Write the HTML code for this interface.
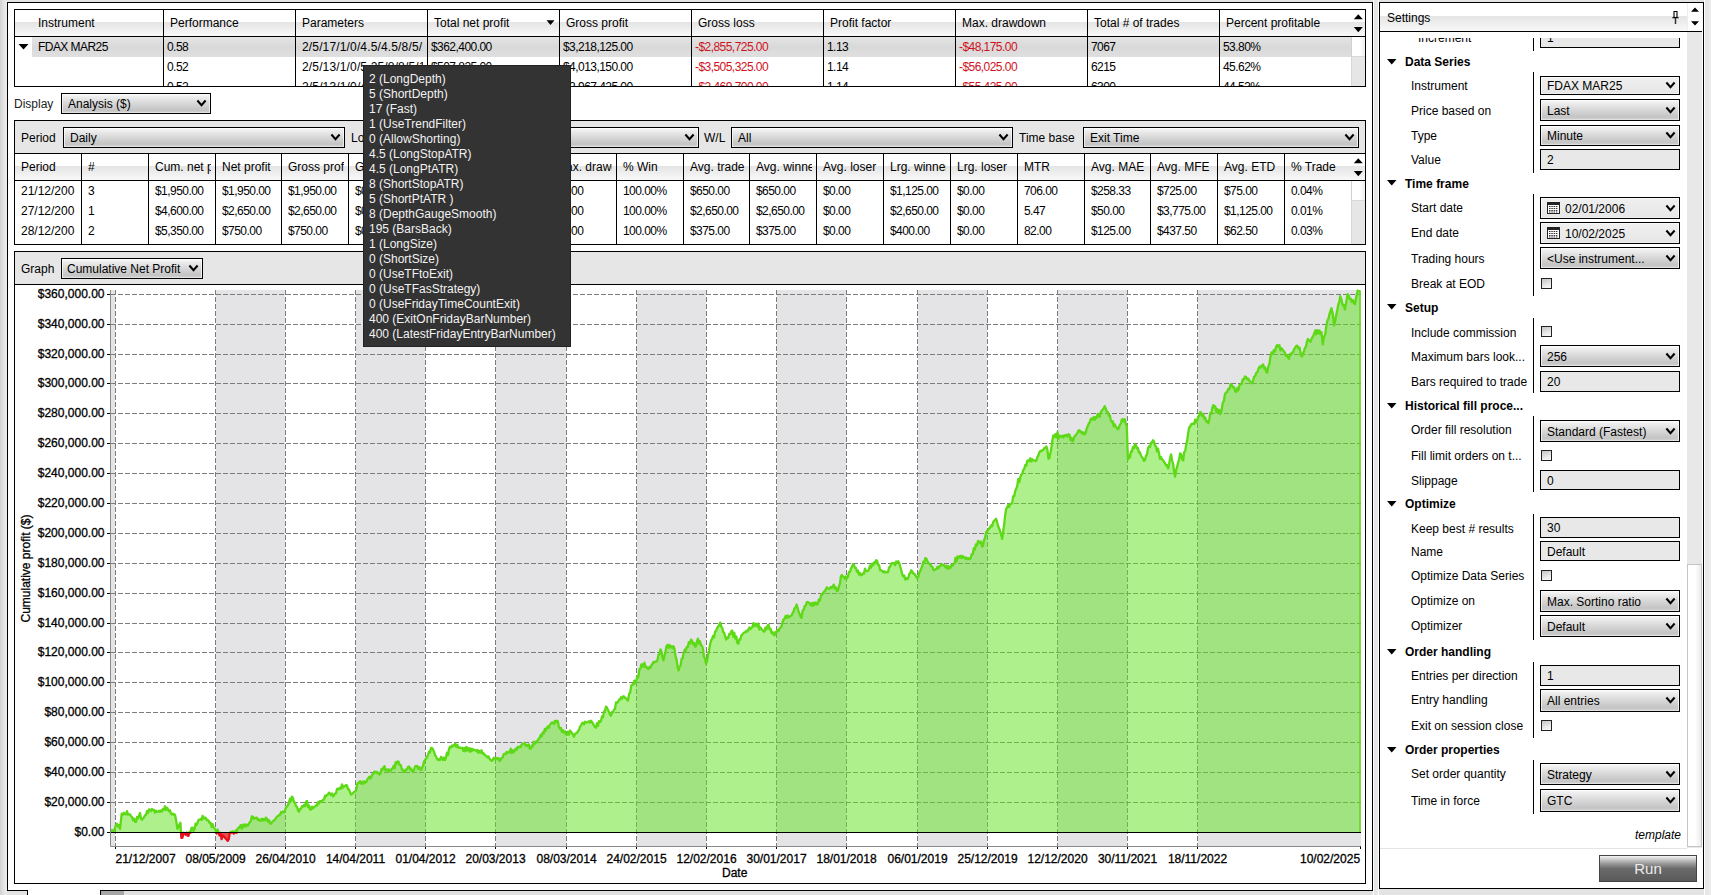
<!DOCTYPE html><html><head><meta charset="utf-8"><style>
*{box-sizing:border-box;margin:0;padding:0}
html,body{width:1711px;height:895px;overflow:hidden;background:#e3e3e3;font-family:"Liberation Sans",sans-serif;font-size:12px;color:#000}
.b{position:absolute}
.t{position:absolute;white-space:nowrap;line-height:15px;font-size:12px}
.cmb{border:1px solid #000;overflow:hidden}
.tbx{border:1px solid #000;background:#e8e8e8;overflow:hidden}
.hdr{background:linear-gradient(#fff 0,#fff 46%,#e5e5e5 48%,#eaeaea 62%,#f4f4f4 88%,#f8f8f8 100%)}
.red{color:#d0101c}
.clip{overflow:hidden}
.ax{-webkit-text-stroke:0.3px #000}
</style></head><body>
<div class="b" style="left:0px;top:0px;width:7px;height:895px;background:linear-gradient(90deg,#d2d2d2,#e6e6e6 60%,#ececec)"></div>
<div class="b" style="left:7px;top:2px;width:1366px;height:889px;background:#fff;border:1px solid #000;border-bottom:none"></div>
<div class="b" style="left:7px;top:890px;width:21px;height:1px;background:#000"></div>
<div class="b" style="left:100px;top:890px;width:1273px;height:1px;background:#000"></div>
<div class="b" style="left:27px;top:890px;width:1px;height:5px;background:#000"></div>
<div class="b" style="left:100px;top:890px;width:1px;height:5px;background:#000"></div>
<div class="b" style="left:28px;top:891px;width:72px;height:4px;background:#fff"></div>
<div class="b" style="left:101px;top:891px;width:1271px;height:4px;background:#e0e0e0"></div>
<div class="b" style="left:101px;top:891px;width:23px;height:4px;background:#a6a6a6"></div>
<div class="b" style="left:14px;top:9px;width:1352px;height:78px;border:1px solid #000;background:#fff"></div>
<div class="b" style="left:15px;top:10px;width:1335px;height:26px;"></div>
<div class="b hdr" style="left:15px;top:10px;width:1350px;height:26px"></div>
<div class="b" style="left:15px;top:36px;width:1350px;height:1px;background:#000"></div>
<div class="b" style="left:32px;top:37px;width:131px;height:20px;background:linear-gradient(#e4e4e4,#d9d9d9 50%,#dfdfdf)"></div>
<div class="b" style="left:164px;top:37px;width:1187px;height:20px;background:linear-gradient(#e4e4e4,#d9d9d9 50%,#dfdfdf)"></div>
<div class="b" style="left:163px;top:10px;width:1px;height:76px;background:#000"></div>
<div class="b" style="left:295px;top:10px;width:1px;height:76px;background:#000"></div>
<div class="b" style="left:427px;top:10px;width:1px;height:76px;background:#000"></div>
<div class="b" style="left:559px;top:10px;width:1px;height:76px;background:#000"></div>
<div class="b" style="left:691px;top:10px;width:1px;height:76px;background:#000"></div>
<div class="b" style="left:823px;top:10px;width:1px;height:76px;background:#000"></div>
<div class="b" style="left:955px;top:10px;width:1px;height:76px;background:#000"></div>
<div class="b" style="left:1087px;top:10px;width:1px;height:76px;background:#000"></div>
<div class="b" style="left:1219px;top:10px;width:1px;height:76px;background:#000"></div>
<div class="t " style="left:38px;top:16.34px;">Instrument</div>
<div class="t " style="left:170px;top:16.34px;">Performance</div>
<div class="t " style="left:302px;top:16.34px;">Parameters</div>
<div class="t " style="left:434px;top:16.34px;">Total net profit</div>
<div class="t " style="left:566px;top:16.34px;">Gross profit</div>
<div class="t " style="left:698px;top:16.34px;">Gross loss</div>
<div class="t " style="left:830px;top:16.34px;">Profit factor</div>
<div class="t " style="left:962px;top:16.34px;">Max. drawdown</div>
<div class="t " style="left:1094px;top:16.34px;">Total # of trades</div>
<div class="t " style="left:1226px;top:16.34px;">Percent profitable</div>
<svg class="b" style="left:546px;top:20px" width="9" height="6"><path d="M0.5 0.3 L8.5 0.3 L4.5 5 Z" fill="#000"/></svg>
<svg class="b" style="left:18px;top:44px" width="11" height="6"><path d="M0.5 0 L10.5 0 L5.5 5.5 Z" fill="#000"/></svg>
<div class="b clip" style="left:15px;top:37px;width:144px;height:49px"><div class="t " style="left:23px;top:3.34px;letter-spacing:-0.55px">FDAX MAR25</div></div>
<div class="b clip" style="left:164px;top:37px;width:127px;height:49px"><div class="t " style="left:3px;top:3.34px;letter-spacing:-0.55px">0.58</div></div>
<div class="b clip" style="left:296px;top:37px;width:127px;height:49px"><div class="t " style="left:6px;top:3.34px;letter-spacing:0.15px">2/5/17/1/0/4.5/4.5/8/5/195/</div></div>
<div class="b clip" style="left:428px;top:37px;width:127px;height:49px"><div class="t " style="left:3px;top:3.34px;letter-spacing:-0.55px">$362,400.00</div></div>
<div class="b clip" style="left:560px;top:37px;width:127px;height:49px"><div class="t " style="left:3px;top:3.34px;letter-spacing:-0.55px">$3,218,125.00</div></div>
<div class="b clip" style="left:692px;top:37px;width:127px;height:49px"><div class="t red" style="left:3px;top:3.34px;letter-spacing:-0.55px">-$2,855,725.00</div></div>
<div class="b clip" style="left:824px;top:37px;width:127px;height:49px"><div class="t " style="left:3px;top:3.34px;letter-spacing:-0.55px">1.13</div></div>
<div class="b clip" style="left:956px;top:37px;width:127px;height:49px"><div class="t red" style="left:3px;top:3.34px;letter-spacing:-0.55px">-$48,175.00</div></div>
<div class="b clip" style="left:1088px;top:37px;width:127px;height:49px"><div class="t " style="left:3px;top:3.34px;letter-spacing:-0.55px">7067</div></div>
<div class="b clip" style="left:1220px;top:37px;width:126px;height:49px"><div class="t " style="left:3px;top:3.34px;letter-spacing:-0.55px">53.80%</div></div>
<div class="b clip" style="left:164px;top:37px;width:127px;height:49px"><div class="t " style="left:3px;top:23.34px;letter-spacing:-0.55px">0.52</div></div>
<div class="b clip" style="left:296px;top:37px;width:127px;height:49px"><div class="t " style="left:6px;top:23.34px;letter-spacing:0.15px">2/5/13/1/0/5.25/8/8/5/195</div></div>
<div class="b clip" style="left:428px;top:37px;width:127px;height:49px"><div class="t " style="left:3px;top:23.34px;letter-spacing:-0.55px">$507,825.00</div></div>
<div class="b clip" style="left:560px;top:37px;width:127px;height:49px"><div class="t " style="left:3px;top:23.34px;letter-spacing:-0.55px">$4,013,150.00</div></div>
<div class="b clip" style="left:692px;top:37px;width:127px;height:49px"><div class="t red" style="left:3px;top:23.34px;letter-spacing:-0.55px">-$3,505,325.00</div></div>
<div class="b clip" style="left:824px;top:37px;width:127px;height:49px"><div class="t " style="left:3px;top:23.34px;letter-spacing:-0.55px">1.14</div></div>
<div class="b clip" style="left:956px;top:37px;width:127px;height:49px"><div class="t red" style="left:3px;top:23.34px;letter-spacing:-0.55px">-$56,025.00</div></div>
<div class="b clip" style="left:1088px;top:37px;width:127px;height:49px"><div class="t " style="left:3px;top:23.34px;letter-spacing:-0.55px">6215</div></div>
<div class="b clip" style="left:1220px;top:37px;width:126px;height:49px"><div class="t " style="left:3px;top:23.34px;letter-spacing:-0.55px">45.62%</div></div>
<div class="b clip" style="left:164px;top:37px;width:127px;height:49px"><div class="t " style="left:3px;top:43.34px;letter-spacing:-0.55px">0.52</div></div>
<div class="b clip" style="left:296px;top:37px;width:127px;height:49px"><div class="t " style="left:6px;top:43.34px;letter-spacing:0.15px">2/5/13/1/0/4.5/8/8/5/195</div></div>
<div class="b clip" style="left:428px;top:37px;width:127px;height:49px"><div class="t " style="left:3px;top:43.34px;letter-spacing:-0.55px">$497,725.00</div></div>
<div class="b clip" style="left:560px;top:37px;width:127px;height:49px"><div class="t " style="left:3px;top:43.34px;letter-spacing:-0.55px">$2,967,425.00</div></div>
<div class="b clip" style="left:692px;top:37px;width:127px;height:49px"><div class="t red" style="left:3px;top:43.34px;letter-spacing:-0.55px">-$2,469,700.00</div></div>
<div class="b clip" style="left:824px;top:37px;width:127px;height:49px"><div class="t " style="left:3px;top:43.34px;letter-spacing:-0.55px">1.14</div></div>
<div class="b clip" style="left:956px;top:37px;width:127px;height:49px"><div class="t red" style="left:3px;top:43.34px;letter-spacing:-0.55px">-$55,425.00</div></div>
<div class="b clip" style="left:1088px;top:37px;width:127px;height:49px"><div class="t " style="left:3px;top:43.34px;letter-spacing:-0.55px">6300</div></div>
<div class="b clip" style="left:1220px;top:37px;width:126px;height:49px"><div class="t " style="left:3px;top:43.34px;letter-spacing:-0.55px">44.53%</div></div>
<div class="b" style="left:1351px;top:37px;width:14px;height:49px;background:#e6e6e6;border-left:1px solid #d8d8d8"></div>
<svg class="b" style="left:1353px;top:13px" width="11" height="21"><path d="M0.8 6.3 L9.8 6.3 L5.3 1.2 Z M0.8 14 L9.8 14 L5.3 19.2 Z" fill="#000"/></svg>
<div class="b" style="left:1351px;top:37px;width:14px;height:20px;background:linear-gradient(90deg,#fff 60%,#eee);border-left:1px solid #d0d0d0;border-bottom:1px solid #d8d8d8"></div>
<div class="t " style="left:14px;top:97.34px;color:#222">Display</div>
<div class="b cmb" style="left:61px;top:93px;width:150px;height:21px;background:linear-gradient(#fbfbfb 0,#efefef 12%,#dadada 45%,#c4c4c4 85%,#d4d4d4 100%);"><div class="b" style="left:0;top:0;right:0;bottom:0;border:1px solid rgba(255,255,255,0.7);border-bottom-color:rgba(255,255,255,0.35)"></div><div class="t" style="left:6px;top:3.14px">Analysis ($)</div><svg width="11" height="9" viewBox="0 0 11 9" style="position:absolute;right:3.5px;top:5.0px"><path d="M1.4 1.5 L5.5 6.2 L9.6 1.5" fill="none" stroke="#000" stroke-width="2"/></svg></div>
<div class="b" style="left:14px;top:120px;width:1352px;height:125px;border:1px solid #000;background:#fff"></div>
<div class="b" style="left:15px;top:121px;width:1350px;height:32px;background:#e6e6e6"></div>
<div class="b" style="left:15px;top:153px;width:1350px;height:1px;background:#000"></div>
<div class="t " style="left:21px;top:131.34px;">Period</div>
<div class="b cmb" style="left:63px;top:127px;width:282px;height:21px;background:linear-gradient(#fbfbfb 0,#efefef 12%,#dadada 45%,#c4c4c4 85%,#d4d4d4 100%);"><div class="b" style="left:0;top:0;right:0;bottom:0;border:1px solid rgba(255,255,255,0.7);border-bottom-color:rgba(255,255,255,0.35)"></div><div class="t" style="left:6px;top:3.14px">Daily</div><svg width="11" height="9" viewBox="0 0 11 9" style="position:absolute;right:3.5px;top:5.0px"><path d="M1.4 1.5 L5.5 6.2 L9.6 1.5" fill="none" stroke="#000" stroke-width="2"/></svg></div>
<div class="t " style="left:351px;top:131.34px;">Long/Short</div>
<div class="b cmb" style="left:440px;top:127px;width:259px;height:21px;background:linear-gradient(#fbfbfb 0,#efefef 12%,#dadada 45%,#c4c4c4 85%,#d4d4d4 100%);"><div class="b" style="left:0;top:0;right:0;bottom:0;border:1px solid rgba(255,255,255,0.7);border-bottom-color:rgba(255,255,255,0.35)"></div><div class="t" style="left:6px;top:3.14px"></div><svg width="11" height="9" viewBox="0 0 11 9" style="position:absolute;right:3.5px;top:5.0px"><path d="M1.4 1.5 L5.5 6.2 L9.6 1.5" fill="none" stroke="#000" stroke-width="2"/></svg></div>
<div class="t " style="left:704px;top:131.34px;">W/L</div>
<div class="b cmb" style="left:731px;top:127px;width:282px;height:21px;background:linear-gradient(#fbfbfb 0,#efefef 12%,#dadada 45%,#c4c4c4 85%,#d4d4d4 100%);"><div class="b" style="left:0;top:0;right:0;bottom:0;border:1px solid rgba(255,255,255,0.7);border-bottom-color:rgba(255,255,255,0.35)"></div><div class="t" style="left:6px;top:3.14px">All</div><svg width="11" height="9" viewBox="0 0 11 9" style="position:absolute;right:3.5px;top:5.0px"><path d="M1.4 1.5 L5.5 6.2 L9.6 1.5" fill="none" stroke="#000" stroke-width="2"/></svg></div>
<div class="t " style="left:1019px;top:131.34px;">Time base</div>
<div class="b cmb" style="left:1083px;top:127px;width:276px;height:21px;background:linear-gradient(#fbfbfb 0,#efefef 12%,#dadada 45%,#c4c4c4 85%,#d4d4d4 100%);"><div class="b" style="left:0;top:0;right:0;bottom:0;border:1px solid rgba(255,255,255,0.7);border-bottom-color:rgba(255,255,255,0.35)"></div><div class="t" style="left:6px;top:3.14px">Exit Time</div><svg width="11" height="9" viewBox="0 0 11 9" style="position:absolute;right:3.5px;top:5.0px"><path d="M1.4 1.5 L5.5 6.2 L9.6 1.5" fill="none" stroke="#000" stroke-width="2"/></svg></div>
<div class="b hdr" style="left:15px;top:154px;width:1350px;height:26px"></div>
<div class="b" style="left:15px;top:180px;width:1350px;height:1px;background:#000"></div>
<div class="b" style="left:81px;top:154px;width:1px;height:90px;background:#000"></div>
<div class="b" style="left:148px;top:154px;width:1px;height:90px;background:#000"></div>
<div class="b" style="left:215px;top:154px;width:1px;height:90px;background:#000"></div>
<div class="b" style="left:281px;top:154px;width:1px;height:90px;background:#000"></div>
<div class="b" style="left:348px;top:154px;width:1px;height:90px;background:#000"></div>
<div class="b" style="left:415px;top:154px;width:1px;height:90px;background:#000"></div>
<div class="b" style="left:482px;top:154px;width:1px;height:90px;background:#000"></div>
<div class="b" style="left:549px;top:154px;width:1px;height:90px;background:#000"></div>
<div class="b" style="left:616px;top:154px;width:1px;height:90px;background:#000"></div>
<div class="b" style="left:683px;top:154px;width:1px;height:90px;background:#000"></div>
<div class="b" style="left:749px;top:154px;width:1px;height:90px;background:#000"></div>
<div class="b" style="left:816px;top:154px;width:1px;height:90px;background:#000"></div>
<div class="b" style="left:883px;top:154px;width:1px;height:90px;background:#000"></div>
<div class="b" style="left:950px;top:154px;width:1px;height:90px;background:#000"></div>
<div class="b" style="left:1017px;top:154px;width:1px;height:90px;background:#000"></div>
<div class="b" style="left:1084px;top:154px;width:1px;height:90px;background:#000"></div>
<div class="b" style="left:1150px;top:154px;width:1px;height:90px;background:#000"></div>
<div class="b" style="left:1217px;top:154px;width:1px;height:90px;background:#000"></div>
<div class="b" style="left:1284px;top:154px;width:1px;height:90px;background:#000"></div>
<div class="b clip" style="left:15px;top:154px;width:62px;height:26px"><div class="t" style="left:6px;top:6.34px">Period</div></div>
<div class="b clip" style="left:82px;top:154px;width:62px;height:26px"><div class="t" style="left:6px;top:6.34px">#</div></div>
<div class="b clip" style="left:149px;top:154px;width:62px;height:26px"><div class="t" style="left:6px;top:6.34px">Cum. net profit</div></div>
<div class="b clip" style="left:216px;top:154px;width:61px;height:26px"><div class="t" style="left:6px;top:6.34px">Net profit</div></div>
<div class="b clip" style="left:282px;top:154px;width:62px;height:26px"><div class="t" style="left:6px;top:6.34px">Gross profit</div></div>
<div class="b clip" style="left:349px;top:154px;width:62px;height:26px"><div class="t" style="left:6px;top:6.34px">Gross loss</div></div>
<div class="b clip" style="left:416px;top:154px;width:62px;height:26px"><div class="t" style="left:6px;top:6.34px">Commission</div></div>
<div class="b clip" style="left:483px;top:154px;width:62px;height:26px"><div class="t" style="left:6px;top:6.34px">Cum. max. drawdown</div></div>
<div class="b clip" style="left:550px;top:154px;width:62px;height:26px"><div class="t" style="left:6px;top:6.34px">Max. drawdown</div></div>
<div class="b clip" style="left:617px;top:154px;width:62px;height:26px"><div class="t" style="left:6px;top:6.34px">% Win</div></div>
<div class="b clip" style="left:684px;top:154px;width:61px;height:26px"><div class="t" style="left:6px;top:6.34px">Avg. trade</div></div>
<div class="b clip" style="left:750px;top:154px;width:62px;height:26px"><div class="t" style="left:6px;top:6.34px">Avg. winner</div></div>
<div class="b clip" style="left:817px;top:154px;width:62px;height:26px"><div class="t" style="left:6px;top:6.34px">Avg. loser</div></div>
<div class="b clip" style="left:884px;top:154px;width:62px;height:26px"><div class="t" style="left:6px;top:6.34px">Lrg. winner</div></div>
<div class="b clip" style="left:951px;top:154px;width:62px;height:26px"><div class="t" style="left:6px;top:6.34px">Lrg. loser</div></div>
<div class="b clip" style="left:1018px;top:154px;width:62px;height:26px"><div class="t" style="left:6px;top:6.34px">MTR</div></div>
<div class="b clip" style="left:1085px;top:154px;width:61px;height:26px"><div class="t" style="left:6px;top:6.34px">Avg. MAE</div></div>
<div class="b clip" style="left:1151px;top:154px;width:62px;height:26px"><div class="t" style="left:6px;top:6.34px">Avg. MFE</div></div>
<div class="b clip" style="left:1218px;top:154px;width:62px;height:26px"><div class="t" style="left:6px;top:6.34px">Avg. ETD</div></div>
<div class="b clip" style="left:1285px;top:154px;width:61px;height:26px"><div class="t" style="left:6px;top:6.34px">% Trade</div></div>
<div class="b clip" style="left:15px;top:181px;width:60px;height:63px"><div class="t" style="left:6px;top:3.34px;letter-spacing:0px">21/12/2007</div></div>
<div class="b clip" style="left:82px;top:181px;width:62px;height:63px"><div class="t" style="left:6px;top:3.34px;letter-spacing:-0.55px">3</div></div>
<div class="b clip" style="left:149px;top:181px;width:62px;height:63px"><div class="t" style="left:6px;top:3.34px;letter-spacing:-0.55px">$1,950.00</div></div>
<div class="b clip" style="left:216px;top:181px;width:61px;height:63px"><div class="t" style="left:6px;top:3.34px;letter-spacing:-0.55px">$1,950.00</div></div>
<div class="b clip" style="left:282px;top:181px;width:62px;height:63px"><div class="t" style="left:6px;top:3.34px;letter-spacing:-0.55px">$1,950.00</div></div>
<div class="b clip" style="left:349px;top:181px;width:62px;height:63px"><div class="t" style="left:6px;top:3.34px;letter-spacing:-0.55px">$0.00</div></div>
<div class="b clip" style="left:416px;top:181px;width:62px;height:63px"><div class="t" style="left:6px;top:3.34px;letter-spacing:-0.55px">$0.00</div></div>
<div class="b clip" style="left:483px;top:181px;width:62px;height:63px"><div class="t" style="left:6px;top:3.34px;letter-spacing:-0.55px">$0.00</div></div>
<div class="b clip" style="left:550px;top:181px;width:62px;height:63px"><div class="t" style="left:6px;top:3.34px;letter-spacing:-0.55px">$0.00</div></div>
<div class="b clip" style="left:617px;top:181px;width:62px;height:63px"><div class="t" style="left:6px;top:3.34px;letter-spacing:-0.55px">100.00%</div></div>
<div class="b clip" style="left:684px;top:181px;width:61px;height:63px"><div class="t" style="left:6px;top:3.34px;letter-spacing:-0.55px">$650.00</div></div>
<div class="b clip" style="left:750px;top:181px;width:62px;height:63px"><div class="t" style="left:6px;top:3.34px;letter-spacing:-0.55px">$650.00</div></div>
<div class="b clip" style="left:817px;top:181px;width:62px;height:63px"><div class="t" style="left:6px;top:3.34px;letter-spacing:-0.55px">$0.00</div></div>
<div class="b clip" style="left:884px;top:181px;width:62px;height:63px"><div class="t" style="left:6px;top:3.34px;letter-spacing:-0.55px">$1,125.00</div></div>
<div class="b clip" style="left:951px;top:181px;width:62px;height:63px"><div class="t" style="left:6px;top:3.34px;letter-spacing:-0.55px">$0.00</div></div>
<div class="b clip" style="left:1018px;top:181px;width:62px;height:63px"><div class="t" style="left:6px;top:3.34px;letter-spacing:-0.55px">706.00</div></div>
<div class="b clip" style="left:1085px;top:181px;width:61px;height:63px"><div class="t" style="left:6px;top:3.34px;letter-spacing:-0.55px">$258.33</div></div>
<div class="b clip" style="left:1151px;top:181px;width:62px;height:63px"><div class="t" style="left:6px;top:3.34px;letter-spacing:-0.55px">$725.00</div></div>
<div class="b clip" style="left:1218px;top:181px;width:62px;height:63px"><div class="t" style="left:6px;top:3.34px;letter-spacing:-0.55px">$75.00</div></div>
<div class="b clip" style="left:1285px;top:181px;width:61px;height:63px"><div class="t" style="left:6px;top:3.34px;letter-spacing:-0.55px">0.04%</div></div>
<div class="b clip" style="left:15px;top:181px;width:60px;height:63px"><div class="t" style="left:6px;top:23.34px;letter-spacing:0px">27/12/2007</div></div>
<div class="b clip" style="left:82px;top:181px;width:62px;height:63px"><div class="t" style="left:6px;top:23.34px;letter-spacing:-0.55px">1</div></div>
<div class="b clip" style="left:149px;top:181px;width:62px;height:63px"><div class="t" style="left:6px;top:23.34px;letter-spacing:-0.55px">$4,600.00</div></div>
<div class="b clip" style="left:216px;top:181px;width:61px;height:63px"><div class="t" style="left:6px;top:23.34px;letter-spacing:-0.55px">$2,650.00</div></div>
<div class="b clip" style="left:282px;top:181px;width:62px;height:63px"><div class="t" style="left:6px;top:23.34px;letter-spacing:-0.55px">$2,650.00</div></div>
<div class="b clip" style="left:349px;top:181px;width:62px;height:63px"><div class="t" style="left:6px;top:23.34px;letter-spacing:-0.55px">$0.00</div></div>
<div class="b clip" style="left:416px;top:181px;width:62px;height:63px"><div class="t" style="left:6px;top:23.34px;letter-spacing:-0.55px">$0.00</div></div>
<div class="b clip" style="left:483px;top:181px;width:62px;height:63px"><div class="t" style="left:6px;top:23.34px;letter-spacing:-0.55px">$0.00</div></div>
<div class="b clip" style="left:550px;top:181px;width:62px;height:63px"><div class="t" style="left:6px;top:23.34px;letter-spacing:-0.55px">$0.00</div></div>
<div class="b clip" style="left:617px;top:181px;width:62px;height:63px"><div class="t" style="left:6px;top:23.34px;letter-spacing:-0.55px">100.00%</div></div>
<div class="b clip" style="left:684px;top:181px;width:61px;height:63px"><div class="t" style="left:6px;top:23.34px;letter-spacing:-0.55px">$2,650.00</div></div>
<div class="b clip" style="left:750px;top:181px;width:62px;height:63px"><div class="t" style="left:6px;top:23.34px;letter-spacing:-0.55px">$2,650.00</div></div>
<div class="b clip" style="left:817px;top:181px;width:62px;height:63px"><div class="t" style="left:6px;top:23.34px;letter-spacing:-0.55px">$0.00</div></div>
<div class="b clip" style="left:884px;top:181px;width:62px;height:63px"><div class="t" style="left:6px;top:23.34px;letter-spacing:-0.55px">$2,650.00</div></div>
<div class="b clip" style="left:951px;top:181px;width:62px;height:63px"><div class="t" style="left:6px;top:23.34px;letter-spacing:-0.55px">$0.00</div></div>
<div class="b clip" style="left:1018px;top:181px;width:62px;height:63px"><div class="t" style="left:6px;top:23.34px;letter-spacing:-0.55px">5.47</div></div>
<div class="b clip" style="left:1085px;top:181px;width:61px;height:63px"><div class="t" style="left:6px;top:23.34px;letter-spacing:-0.55px">$50.00</div></div>
<div class="b clip" style="left:1151px;top:181px;width:62px;height:63px"><div class="t" style="left:6px;top:23.34px;letter-spacing:-0.55px">$3,775.00</div></div>
<div class="b clip" style="left:1218px;top:181px;width:62px;height:63px"><div class="t" style="left:6px;top:23.34px;letter-spacing:-0.55px">$1,125.00</div></div>
<div class="b clip" style="left:1285px;top:181px;width:61px;height:63px"><div class="t" style="left:6px;top:23.34px;letter-spacing:-0.55px">0.01%</div></div>
<div class="b clip" style="left:15px;top:181px;width:60px;height:63px"><div class="t" style="left:6px;top:43.34px;letter-spacing:0px">28/12/2007</div></div>
<div class="b clip" style="left:82px;top:181px;width:62px;height:63px"><div class="t" style="left:6px;top:43.34px;letter-spacing:-0.55px">2</div></div>
<div class="b clip" style="left:149px;top:181px;width:62px;height:63px"><div class="t" style="left:6px;top:43.34px;letter-spacing:-0.55px">$5,350.00</div></div>
<div class="b clip" style="left:216px;top:181px;width:61px;height:63px"><div class="t" style="left:6px;top:43.34px;letter-spacing:-0.55px">$750.00</div></div>
<div class="b clip" style="left:282px;top:181px;width:62px;height:63px"><div class="t" style="left:6px;top:43.34px;letter-spacing:-0.55px">$750.00</div></div>
<div class="b clip" style="left:349px;top:181px;width:62px;height:63px"><div class="t" style="left:6px;top:43.34px;letter-spacing:-0.55px">$0.00</div></div>
<div class="b clip" style="left:416px;top:181px;width:62px;height:63px"><div class="t" style="left:6px;top:43.34px;letter-spacing:-0.55px">$0.00</div></div>
<div class="b clip" style="left:483px;top:181px;width:62px;height:63px"><div class="t" style="left:6px;top:43.34px;letter-spacing:-0.55px">$0.00</div></div>
<div class="b clip" style="left:550px;top:181px;width:62px;height:63px"><div class="t" style="left:6px;top:43.34px;letter-spacing:-0.55px">$0.00</div></div>
<div class="b clip" style="left:617px;top:181px;width:62px;height:63px"><div class="t" style="left:6px;top:43.34px;letter-spacing:-0.55px">100.00%</div></div>
<div class="b clip" style="left:684px;top:181px;width:61px;height:63px"><div class="t" style="left:6px;top:43.34px;letter-spacing:-0.55px">$375.00</div></div>
<div class="b clip" style="left:750px;top:181px;width:62px;height:63px"><div class="t" style="left:6px;top:43.34px;letter-spacing:-0.55px">$375.00</div></div>
<div class="b clip" style="left:817px;top:181px;width:62px;height:63px"><div class="t" style="left:6px;top:43.34px;letter-spacing:-0.55px">$0.00</div></div>
<div class="b clip" style="left:884px;top:181px;width:62px;height:63px"><div class="t" style="left:6px;top:43.34px;letter-spacing:-0.55px">$400.00</div></div>
<div class="b clip" style="left:951px;top:181px;width:62px;height:63px"><div class="t" style="left:6px;top:43.34px;letter-spacing:-0.55px">$0.00</div></div>
<div class="b clip" style="left:1018px;top:181px;width:62px;height:63px"><div class="t" style="left:6px;top:43.34px;letter-spacing:-0.55px">82.00</div></div>
<div class="b clip" style="left:1085px;top:181px;width:61px;height:63px"><div class="t" style="left:6px;top:43.34px;letter-spacing:-0.55px">$125.00</div></div>
<div class="b clip" style="left:1151px;top:181px;width:62px;height:63px"><div class="t" style="left:6px;top:43.34px;letter-spacing:-0.55px">$437.50</div></div>
<div class="b clip" style="left:1218px;top:181px;width:62px;height:63px"><div class="t" style="left:6px;top:43.34px;letter-spacing:-0.55px">$62.50</div></div>
<div class="b clip" style="left:1285px;top:181px;width:61px;height:63px"><div class="t" style="left:6px;top:43.34px;letter-spacing:-0.55px">0.03%</div></div>
<div class="b" style="left:1351px;top:181px;width:14px;height:63px;background:#e6e6e6;border-left:1px solid #d8d8d8"></div>
<svg class="b" style="left:1353px;top:157px" width="11" height="21"><path d="M0.8 6.3 L9.8 6.3 L5.3 1.2 Z M0.8 14 L9.8 14 L5.3 19.2 Z" fill="#000"/></svg>
<div class="b" style="left:1351px;top:181px;width:14px;height:20px;background:linear-gradient(90deg,#fff 60%,#eee);border-left:1px solid #d0d0d0;border-bottom:1px solid #d8d8d8"></div>
<div class="b" style="left:14px;top:251px;width:1352px;height:633px;border:1px solid #000;background:#fff"></div>
<div class="b" style="left:15px;top:252px;width:1350px;height:32px;background:#e6e6e6"></div>
<div class="b" style="left:15px;top:284px;width:1350px;height:1px;background:#000"></div>
<div class="t " style="left:21px;top:262.34px;">Graph</div>
<div class="b cmb" style="left:61px;top:258px;width:142px;height:21px;background:linear-gradient(#fbfbfb 0,#efefef 12%,#dadada 45%,#c4c4c4 85%,#d4d4d4 100%);"><div class="b" style="left:0;top:0;right:0;bottom:0;border:1px solid rgba(255,255,255,0.7);border-bottom-color:rgba(255,255,255,0.35)"></div><div class="t" style="left:5px;top:3.14px">Cumulative Net Profit</div><svg width="11" height="9" viewBox="0 0 11 9" style="position:absolute;right:3.5px;top:5.0px"><path d="M1.4 1.5 L5.5 6.2 L9.6 1.5" fill="none" stroke="#000" stroke-width="2"/></svg></div>
<svg class="b" style="left:0;top:0" width="1711" height="895" viewBox="0 0 1711 895"><rect x="111" y="290" width="4" height="556" fill="#e4e4e7"/><rect x="216" y="290" width="69" height="556" fill="#e4e4e7"/><rect x="356" y="290" width="69" height="556" fill="#e4e4e7"/><rect x="496" y="290" width="70" height="556" fill="#e4e4e7"/><rect x="637" y="290" width="69" height="556" fill="#e4e4e7"/><rect x="777" y="290" width="69" height="556" fill="#e4e4e7"/><rect x="918" y="290" width="69" height="556" fill="#e4e4e7"/><rect x="1058" y="290" width="69" height="556" fill="#e4e4e7"/><rect x="1198" y="290" width="163" height="556" fill="#e4e4e7"/><line x1="111" y1="802.5" x2="1361" y2="802.5" stroke="#7c7c7c" stroke-width="1" stroke-dasharray="5,2"/><line x1="111" y1="772.5" x2="1361" y2="772.5" stroke="#7c7c7c" stroke-width="1" stroke-dasharray="5,2"/><line x1="111" y1="742.5" x2="1361" y2="742.5" stroke="#7c7c7c" stroke-width="1" stroke-dasharray="5,2"/><line x1="111" y1="712.5" x2="1361" y2="712.5" stroke="#7c7c7c" stroke-width="1" stroke-dasharray="5,2"/><line x1="111" y1="682.5" x2="1361" y2="682.5" stroke="#7c7c7c" stroke-width="1" stroke-dasharray="5,2"/><line x1="111" y1="652.5" x2="1361" y2="652.5" stroke="#7c7c7c" stroke-width="1" stroke-dasharray="5,2"/><line x1="111" y1="623.5" x2="1361" y2="623.5" stroke="#7c7c7c" stroke-width="1" stroke-dasharray="5,2"/><line x1="111" y1="593.5" x2="1361" y2="593.5" stroke="#7c7c7c" stroke-width="1" stroke-dasharray="5,2"/><line x1="111" y1="563.5" x2="1361" y2="563.5" stroke="#7c7c7c" stroke-width="1" stroke-dasharray="5,2"/><line x1="111" y1="533.5" x2="1361" y2="533.5" stroke="#7c7c7c" stroke-width="1" stroke-dasharray="5,2"/><line x1="111" y1="503.5" x2="1361" y2="503.5" stroke="#7c7c7c" stroke-width="1" stroke-dasharray="5,2"/><line x1="111" y1="473.5" x2="1361" y2="473.5" stroke="#7c7c7c" stroke-width="1" stroke-dasharray="5,2"/><line x1="111" y1="443.5" x2="1361" y2="443.5" stroke="#7c7c7c" stroke-width="1" stroke-dasharray="5,2"/><line x1="111" y1="413.5" x2="1361" y2="413.5" stroke="#7c7c7c" stroke-width="1" stroke-dasharray="5,2"/><line x1="111" y1="383.5" x2="1361" y2="383.5" stroke="#7c7c7c" stroke-width="1" stroke-dasharray="5,2"/><line x1="111" y1="354.5" x2="1361" y2="354.5" stroke="#7c7c7c" stroke-width="1" stroke-dasharray="5,2"/><line x1="111" y1="324.5" x2="1361" y2="324.5" stroke="#7c7c7c" stroke-width="1" stroke-dasharray="5,2"/><line x1="111" y1="294.5" x2="1361" y2="294.5" stroke="#7c7c7c" stroke-width="1" stroke-dasharray="5,2"/><line x1="107" y1="832.5" x2="110" y2="832.5" stroke="#000" stroke-width="1"/><line x1="107" y1="802.5" x2="110" y2="802.5" stroke="#000" stroke-width="1"/><line x1="107" y1="772.5" x2="110" y2="772.5" stroke="#000" stroke-width="1"/><line x1="107" y1="742.5" x2="110" y2="742.5" stroke="#000" stroke-width="1"/><line x1="107" y1="712.5" x2="110" y2="712.5" stroke="#000" stroke-width="1"/><line x1="107" y1="682.5" x2="110" y2="682.5" stroke="#000" stroke-width="1"/><line x1="107" y1="652.5" x2="110" y2="652.5" stroke="#000" stroke-width="1"/><line x1="107" y1="623.5" x2="110" y2="623.5" stroke="#000" stroke-width="1"/><line x1="107" y1="593.5" x2="110" y2="593.5" stroke="#000" stroke-width="1"/><line x1="107" y1="563.5" x2="110" y2="563.5" stroke="#000" stroke-width="1"/><line x1="107" y1="533.5" x2="110" y2="533.5" stroke="#000" stroke-width="1"/><line x1="107" y1="503.5" x2="110" y2="503.5" stroke="#000" stroke-width="1"/><line x1="107" y1="473.5" x2="110" y2="473.5" stroke="#000" stroke-width="1"/><line x1="107" y1="443.5" x2="110" y2="443.5" stroke="#000" stroke-width="1"/><line x1="107" y1="413.5" x2="110" y2="413.5" stroke="#000" stroke-width="1"/><line x1="107" y1="383.5" x2="110" y2="383.5" stroke="#000" stroke-width="1"/><line x1="107" y1="354.5" x2="110" y2="354.5" stroke="#000" stroke-width="1"/><line x1="107" y1="324.5" x2="110" y2="324.5" stroke="#000" stroke-width="1"/><line x1="107" y1="294.5" x2="110" y2="294.5" stroke="#000" stroke-width="1"/><line x1="115.5" y1="290" x2="115.5" y2="846" stroke="#7c7c7c" stroke-width="1" stroke-dasharray="5,2"/><line x1="115.5" y1="846" x2="115.5" y2="849" stroke="#000" stroke-width="1"/><line x1="215.5" y1="290" x2="215.5" y2="846" stroke="#7c7c7c" stroke-width="1" stroke-dasharray="5,2"/><line x1="215.5" y1="846" x2="215.5" y2="849" stroke="#000" stroke-width="1"/><line x1="285.5" y1="290" x2="285.5" y2="846" stroke="#7c7c7c" stroke-width="1" stroke-dasharray="5,2"/><line x1="285.5" y1="846" x2="285.5" y2="849" stroke="#000" stroke-width="1"/><line x1="355.5" y1="290" x2="355.5" y2="846" stroke="#7c7c7c" stroke-width="1" stroke-dasharray="5,2"/><line x1="355.5" y1="846" x2="355.5" y2="849" stroke="#000" stroke-width="1"/><line x1="425.5" y1="290" x2="425.5" y2="846" stroke="#7c7c7c" stroke-width="1" stroke-dasharray="5,2"/><line x1="425.5" y1="846" x2="425.5" y2="849" stroke="#000" stroke-width="1"/><line x1="495.5" y1="290" x2="495.5" y2="846" stroke="#7c7c7c" stroke-width="1" stroke-dasharray="5,2"/><line x1="495.5" y1="846" x2="495.5" y2="849" stroke="#000" stroke-width="1"/><line x1="566.5" y1="290" x2="566.5" y2="846" stroke="#7c7c7c" stroke-width="1" stroke-dasharray="5,2"/><line x1="566.5" y1="846" x2="566.5" y2="849" stroke="#000" stroke-width="1"/><line x1="636.5" y1="290" x2="636.5" y2="846" stroke="#7c7c7c" stroke-width="1" stroke-dasharray="5,2"/><line x1="636.5" y1="846" x2="636.5" y2="849" stroke="#000" stroke-width="1"/><line x1="706.5" y1="290" x2="706.5" y2="846" stroke="#7c7c7c" stroke-width="1" stroke-dasharray="5,2"/><line x1="706.5" y1="846" x2="706.5" y2="849" stroke="#000" stroke-width="1"/><line x1="776.5" y1="290" x2="776.5" y2="846" stroke="#7c7c7c" stroke-width="1" stroke-dasharray="5,2"/><line x1="776.5" y1="846" x2="776.5" y2="849" stroke="#000" stroke-width="1"/><line x1="846.5" y1="290" x2="846.5" y2="846" stroke="#7c7c7c" stroke-width="1" stroke-dasharray="5,2"/><line x1="846.5" y1="846" x2="846.5" y2="849" stroke="#000" stroke-width="1"/><line x1="917.5" y1="290" x2="917.5" y2="846" stroke="#7c7c7c" stroke-width="1" stroke-dasharray="5,2"/><line x1="917.5" y1="846" x2="917.5" y2="849" stroke="#000" stroke-width="1"/><line x1="987.5" y1="290" x2="987.5" y2="846" stroke="#7c7c7c" stroke-width="1" stroke-dasharray="5,2"/><line x1="987.5" y1="846" x2="987.5" y2="849" stroke="#000" stroke-width="1"/><line x1="1057.5" y1="290" x2="1057.5" y2="846" stroke="#7c7c7c" stroke-width="1" stroke-dasharray="5,2"/><line x1="1057.5" y1="846" x2="1057.5" y2="849" stroke="#000" stroke-width="1"/><line x1="1127.5" y1="290" x2="1127.5" y2="846" stroke="#7c7c7c" stroke-width="1" stroke-dasharray="5,2"/><line x1="1127.5" y1="846" x2="1127.5" y2="849" stroke="#000" stroke-width="1"/><line x1="1197.5" y1="290" x2="1197.5" y2="846" stroke="#7c7c7c" stroke-width="1" stroke-dasharray="5,2"/><line x1="1197.5" y1="846" x2="1197.5" y2="849" stroke="#000" stroke-width="1"/><line x1="1360.5" y1="846" x2="1360.5" y2="849" stroke="#000" stroke-width="1"/><clipPath id="above"><rect x="100" y="280" width="1270" height="552.2"/></clipPath><clipPath id="below"><rect x="100" y="832.2" width="1270" height="20"/></clipPath><path d="M110.8,832.0 L112.0,830.0 L113.3,831.5 L114.5,829.8 L115.8,825.2 L117.0,823.8 L118.0,826.6 L119.0,825.0 L120.0,828.8 L121.7,813.7 L122.8,814.9 L123.8,812.7 L124.9,814.1 L126.0,814.3 L127.0,811.1 L128.0,814.7 L129.0,814.3 L130.0,814.3 L131.0,816.2 L132.0,817.3 L133.0,820.2 L134.0,818.5 L135.0,821.8 L136.0,821.9 L137.0,817.0 L138.0,818.3 L139.0,815.7 L140.0,813.0 L141.0,818.7 L142.0,819.7 L143.0,818.4 L144.0,817.5 L145.0,815.3 L146.0,815.0 L147.0,811.0 L148.0,813.0 L149.0,809.5 L150.0,809.7 L151.0,811.1 L152.0,809.0 L153.0,810.2 L154.0,810.0 L155.0,812.7 L156.0,810.8 L157.0,811.9 L158.0,811.7 L159.0,810.7 L160.0,811.8 L161.0,810.4 L162.0,811.6 L163.0,808.9 L164.0,809.6 L165.0,806.3 L166.0,810.0 L167.0,807.7 L168.0,809.4 L169.0,811.2 L170.0,810.2 L171.0,813.7 L172.0,814.5 L173.0,813.6 L174.0,814.8 L175.0,814.7 L176.2,820.8 L177.4,828.8 L178.4,827.5 L179.4,824.3 L180.4,822.8 L181.4,837.9 L182.4,837.7 L183.5,832.6 L184.5,833.8 L185.5,834.8 L186.5,832.4 L187.5,835.6 L188.5,835.8 L189.5,831.8 L190.5,832.6 L191.5,827.8 L192.5,827.6 L193.5,830.8 L194.5,829.2 L195.5,823.7 L196.5,825.1 L197.5,822.8 L198.5,819.8 L199.5,820.0 L200.5,818.9 L201.6,819.7 L202.6,815.9 L203.6,818.5 L204.6,817.7 L205.6,817.6 L206.6,820.2 L207.6,819.7 L208.6,820.8 L209.6,823.0 L210.6,822.7 L211.6,827.1 L212.6,824.1 L213.6,827.2 L214.6,828.4 L215.6,829.8 L216.6,833.5 L217.6,829.6 L218.6,832.8 L219.6,835.5 L220.6,832.8 L221.6,839.2 L222.6,835.3 L223.7,836.4 L224.7,837.3 L225.7,838.7 L226.7,839.5 L227.7,840.9 L228.7,839.2 L229.7,833.4 L230.7,831.8 L231.7,832.6 L232.7,831.1 L233.7,833.6 L234.7,832.8 L235.7,830.4 L236.7,832.7 L237.7,828.4 L238.7,827.8 L239.7,826.9 L240.7,825.2 L241.7,828.7 L242.7,824.7 L243.8,826.7 L244.8,824.4 L245.8,826.3 L246.8,824.7 L247.8,825.5 L248.8,823.8 L249.8,822.1 L250.8,821.3 L251.8,816.5 L252.8,816.7 L253.8,818.7 L254.8,817.8 L255.8,818.1 L256.9,817.6 L257.9,820.0 L258.9,819.3 L259.9,820.7 L260.9,820.8 L261.9,818.6 L262.9,820.5 L263.9,819.0 L264.9,820.2 L265.9,817.6 L266.9,818.7 L267.9,821.8 L268.9,819.9 L269.9,822.9 L270.9,823.8 L271.9,822.3 L272.9,821.2 L273.9,820.3 L275.0,819.7 L276.0,817.7 L277.0,816.7 L278.0,816.1 L279.0,815.1 L280.0,815.0 L281.0,812.0 L282.0,812.8 L283.0,811.6 L284.0,812.2 L285.0,810.7 L286.0,807.4 L287.0,806.5 L288.0,805.0 L289.0,802.5 L290.0,798.6 L291.0,800.8 L292.0,796.6 L293.0,798.2 L294.0,802.3 L295.0,802.6 L296.0,806.3 L297.0,806.7 L298.0,810.5 L299.0,811.7 L300.0,808.8 L301.0,809.0 L302.0,806.1 L303.0,806.6 L304.0,805.0 L305.0,806.2 L306.0,801.7 L307.0,801.0 L308.0,807.0 L309.0,805.5 L310.0,809.5 L311.0,809.7 L312.0,806.7 L313.0,808.4 L314.0,807.0 L315.0,806.4 L316.0,805.4 L317.0,805.6 L318.0,802.1 L319.0,803.6 L320.0,801.0 L321.0,801.7 L322.0,801.0 L323.0,799.8 L324.0,799.6 L325.0,795.7 L326.0,796.3 L327.0,794.9 L328.0,794.3 L329.0,792.6 L330.0,793.5 L331.0,795.1 L332.0,793.5 L333.0,796.3 L334.0,795.6 L335.0,793.6 L336.0,793.4 L337.0,789.1 L338.0,788.6 L339.0,789.3 L340.0,787.6 L341.0,788.7 L342.0,784.3 L343.0,787.7 L344.0,786.1 L345.0,786.3 L346.0,785.0 L347.0,785.6 L348.0,789.1 L349.0,789.4 L350.0,792.3 L351.0,794.6 L352.0,793.9 L353.0,793.1 L354.0,791.9 L355.0,791.6 L356.0,790.6 L357.0,785.0 L358.0,782.6 L359.1,782.9 L360.1,781.2 L361.2,783.8 L362.2,781.8 L363.3,783.8 L364.3,781.2 L365.4,782.6 L366.4,781.8 L367.4,779.3 L368.4,778.1 L369.4,776.6 L370.5,778.6 L371.5,776.1 L372.5,774.3 L373.5,773.4 L374.5,771.5 L375.5,772.4 L376.5,771.6 L377.5,773.2 L378.5,772.8 L379.5,774.5 L380.5,773.6 L381.5,768.9 L382.5,769.8 L383.5,767.5 L384.5,766.1 L385.5,770.6 L386.6,769.5 L387.6,770.5 L388.6,769.3 L389.6,771.5 L390.6,770.7 L391.6,769.0 L392.6,768.4 L393.6,765.9 L394.6,768.4 L395.6,762.1 L396.6,763.8 L397.6,761.4 L398.7,761.8 L399.7,765.0 L400.8,765.1 L401.9,769.5 L402.9,769.6 L404.0,772.0 L405.0,771.3 L406.0,769.3 L407.0,769.4 L408.0,767.0 L409.0,766.4 L410.0,769.5 L411.0,768.5 L412.0,771.0 L413.0,771.8 L414.0,769.5 L415.0,766.5 L416.0,766.0 L417.0,765.8 L418.0,768.9 L419.0,766.9 L420.0,768.8 L421.0,770.0 L422.0,767.2 L423.0,766.2 L424.0,761.4 L425.0,760.0 L426.0,758.8 L427.0,757.4 L428.0,754.9 L429.0,751.6 L430.0,752.3 L431.0,747.8 L432.0,747.8 L433.0,749.6 L434.0,751.6 L435.0,754.8 L436.0,756.4 L437.0,758.8 L438.0,760.0 L439.0,759.2 L440.0,760.1 L441.0,756.9 L442.0,757.9 L443.0,760.0 L444.0,757.6 L445.0,760.0 L446.0,757.3 L447.0,752.6 L448.0,755.1 L449.0,749.2 L450.0,746.8 L451.1,747.5 L452.1,745.4 L453.2,746.3 L454.3,744.8 L455.3,743.6 L456.3,746.8 L457.4,744.9 L458.4,748.0 L459.4,747.3 L460.4,747.8 L461.4,748.1 L462.4,747.7 L463.4,750.9 L464.4,748.2 L465.4,751.3 L466.4,746.8 L467.4,750.3 L468.5,748.0 L469.5,751.7 L470.5,748.4 L471.5,751.4 L472.5,748.9 L473.5,750.2 L474.5,749.8 L475.5,750.3 L476.5,751.4 L477.5,749.9 L478.5,752.8 L479.5,751.0 L480.5,752.5 L481.5,750.3 L482.5,753.5 L483.5,753.1 L484.5,754.8 L485.5,755.3 L486.5,756.2 L487.5,757.4 L488.5,756.4 L489.5,758.7 L490.5,759.9 L491.5,760.8 L492.6,760.5 L493.6,758.0 L494.6,757.9 L495.6,758.9 L496.6,758.0 L497.6,759.3 L498.6,758.1 L499.6,761.0 L500.6,759.9 L501.6,757.8 L502.6,757.6 L503.6,754.3 L504.6,753.8 L505.6,754.2 L506.6,751.9 L507.6,752.7 L508.6,752.0 L509.7,752.3 L510.7,748.7 L511.7,753.0 L512.7,750.2 L513.7,752.3 L514.7,750.8 L515.7,748.6 L516.7,749.7 L517.7,746.9 L518.7,747.6 L519.7,746.5 L520.7,747.1 L521.7,744.5 L522.7,743.9 L523.7,743.7 L524.7,742.8 L525.7,745.8 L526.7,745.0 L527.8,746.2 L528.8,744.5 L529.8,748.8 L530.8,748.5 L531.8,745.8 L532.8,746.4 L533.8,741.6 L534.8,743.7 L535.8,741.7 L536.8,742.3 L537.8,740.0 L538.8,738.8 L539.8,737.3 L540.8,734.7 L541.8,736.3 L542.8,732.3 L543.8,733.4 L544.8,728.8 L545.8,730.6 L546.8,727.7 L547.8,726.5 L548.8,727.8 L549.8,724.9 L550.9,723.5 L551.9,722.4 L552.9,722.7 L553.9,724.1 L554.9,720.9 L555.9,722.4 L556.9,720.7 L557.9,721.2 L558.9,727.2 L559.9,728.7 L560.9,727.7 L561.9,731.9 L562.9,730.2 L564.0,732.9 L565.0,731.5 L566.0,734.4 L567.0,734.7 L568.0,731.8 L569.0,734.7 L570.0,730.5 L571.0,731.7 L572.0,733.3 L573.0,734.6 L574.0,736.7 L575.0,733.8 L576.0,733.3 L577.0,732.9 L578.0,730.9 L579.0,730.0 L580.0,726.5 L581.0,725.6 L582.0,723.2 L583.0,722.7 L584.0,724.2 L585.0,721.7 L586.0,722.6 L587.0,722.3 L588.0,722.0 L589.0,721.2 L590.0,722.6 L591.0,720.7 L592.0,722.1 L593.0,723.5 L594.0,725.8 L595.0,727.0 L596.0,727.7 L597.0,723.1 L598.0,725.8 L599.0,721.1 L600.0,722.0 L601.0,720.7 L602.0,716.4 L603.0,717.1 L604.0,711.4 L605.0,710.8 L606.0,706.6 L607.0,707.6 L608.0,709.9 L609.0,711.9 L610.0,714.6 L611.0,715.6 L612.0,712.0 L613.0,712.5 L614.0,709.6 L615.0,708.8 L616.0,702.5 L617.0,702.6 L618.0,702.1 L619.0,699.9 L620.0,699.4 L621.0,697.3 L622.0,698.9 L623.0,696.5 L624.0,696.3 L625.0,697.9 L626.0,698.3 L627.0,699.8 L628.0,700.5 L629.1,693.9 L630.2,692.5 L631.3,685.5 L632.3,684.5 L633.3,684.6 L634.3,680.7 L635.3,683.2 L636.3,680.4 L637.3,676.5 L638.3,677.3 L639.4,669.3 L640.4,668.7 L641.4,664.3 L642.4,664.4 L643.4,666.7 L644.4,662.7 L645.4,667.0 L646.4,666.7 L647.4,668.4 L648.4,669.1 L649.4,666.9 L650.4,667.8 L651.4,665.5 L652.4,664.0 L653.4,661.9 L654.4,662.5 L655.4,661.5 L656.4,661.6 L657.4,660.3 L658.4,655.1 L659.5,653.9 L660.5,649.3 L661.5,651.6 L662.5,657.6 L663.5,660.3 L664.5,655.5 L665.5,651.4 L666.5,646.2 L667.5,644.8 L668.5,647.9 L669.5,645.0 L670.5,647.3 L671.5,646.1 L672.5,648.2 L673.5,646.2 L674.5,648.8 L675.5,656.2 L676.6,659.7 L677.6,667.1 L678.6,670.4 L679.6,666.4 L680.6,665.6 L681.6,658.8 L682.6,658.5 L683.6,653.3 L684.7,649.7 L685.7,650.7 L686.8,646.9 L687.8,646.9 L688.9,642.1 L689.9,643.6 L691.0,639.6 L692.0,640.6 L693.0,644.1 L694.0,642.9 L695.0,646.7 L696.0,646.3 L697.0,640.9 L698.0,638.6 L699.0,643.6 L700.0,641.3 L701.0,645.2 L702.0,645.7 L703.0,649.2 L704.0,657.1 L705.0,658.0 L706.0,663.8 L707.0,661.4 L708.0,655.0 L709.0,650.7 L710.0,644.7 L711.0,640.7 L712.0,639.1 L713.0,636.0 L714.1,637.4 L715.1,631.7 L716.1,630.9 L717.1,627.9 L718.2,626.6 L719.2,624.7 L720.2,622.6 L721.2,626.6 L722.2,627.5 L723.2,632.0 L724.2,632.8 L725.2,636.9 L726.2,639.6 L727.2,637.5 L728.2,638.0 L729.2,634.0 L730.3,634.4 L731.3,631.2 L732.3,630.6 L733.3,636.8 L734.3,632.9 L735.3,638.5 L736.3,636.5 L737.3,642.9 L738.3,643.7 L739.3,639.5 L740.3,639.5 L741.3,635.4 L742.3,634.6 L743.3,633.3 L744.3,632.5 L745.3,632.4 L746.4,630.7 L747.4,631.6 L748.4,629.6 L749.4,627.5 L750.4,629.2 L751.4,627.8 L752.4,627.3 L753.4,623.1 L754.4,626.2 L755.4,623.7 L756.4,624.6 L757.4,626.6 L758.4,623.5 L759.4,629.5 L760.5,627.5 L761.5,629.0 L762.5,630.2 L763.5,631.1 L764.5,631.6 L765.5,627.5 L766.5,629.3 L767.5,626.0 L768.5,624.6 L769.5,629.3 L770.5,628.6 L771.5,633.1 L772.5,631.9 L773.5,634.6 L774.5,635.4 L775.5,631.8 L776.5,631.8 L777.5,629.9 L778.5,631.3 L779.5,628.8 L780.5,627.6 L781.5,626.7 L782.6,621.7 L783.6,619.5 L784.6,618.7 L785.6,615.9 L786.6,617.9 L787.6,615.4 L788.6,617.5 L789.6,616.8 L790.6,615.9 L791.6,615.5 L792.6,613.3 L793.6,611.4 L794.6,608.2 L795.6,607.5 L796.6,604.5 L797.6,607.8 L798.6,611.8 L799.6,613.9 L800.6,616.5 L801.6,617.8 L802.6,610.7 L803.7,609.8 L804.7,606.1 L805.7,605.7 L806.7,602.4 L807.7,602.0 L808.7,602.5 L809.7,603.4 L810.7,605.2 L811.7,603.1 L812.7,605.8 L813.7,602.6 L814.7,604.8 L815.7,602.4 L816.7,604.5 L817.7,604.2 L818.8,599.6 L819.8,600.7 L820.8,596.4 L821.8,593.9 L822.8,594.2 L823.8,591.8 L824.8,591.3 L825.8,589.4 L826.8,587.4 L827.8,588.2 L828.8,588.6 L829.8,588.6 L830.8,586.9 L831.8,587.9 L832.8,586.4 L833.8,584.6 L834.8,588.6 L835.9,587.5 L836.9,591.0 L837.9,590.4 L838.9,586.4 L839.9,583.8 L840.9,576.3 L841.9,575.0 L842.9,576.8 L843.9,577.0 L844.9,578.8 L845.9,576.5 L846.9,578.3 L847.9,576.8 L848.9,572.2 L849.9,572.0 L850.9,568.6 L851.9,566.8 L852.9,564.2 L853.9,564.6 L854.9,567.8 L855.9,568.0 L857.0,571.8 L858.0,570.4 L859.0,574.7 L860.0,573.1 L861.0,575.3 L862.0,574.9 L863.0,573.3 L864.0,573.6 L865.0,568.7 L866.0,570.9 L867.0,571.1 L868.0,570.8 L869.0,569.3 L870.0,565.6 L871.0,567.8 L872.0,563.7 L873.1,565.4 L874.1,562.4 L875.1,563.2 L876.1,560.2 L877.1,560.7 L878.1,564.9 L879.1,565.1 L880.1,570.4 L881.1,570.3 L882.1,570.8 L883.1,572.2 L884.1,571.2 L885.1,572.5 L886.1,572.0 L887.1,572.3 L888.1,572.1 L889.1,567.5 L890.1,566.7 L891.1,564.2 L892.1,562.9 L893.1,563.5 L894.1,562.9 L895.2,565.3 L896.2,561.5 L897.2,562.3 L898.2,561.2 L899.2,563.0 L900.2,566.6 L901.2,570.0 L902.2,574.2 L903.2,576.3 L904.2,575.4 L905.2,579.5 L906.2,578.1 L907.2,579.3 L908.2,578.0 L909.2,574.2 L910.3,572.7 L911.3,570.3 L912.3,571.6 L913.3,573.5 L914.3,573.7 L915.3,575.2 L916.3,576.7 L917.3,578.3 L918.3,576.9 L919.3,572.6 L920.3,571.1 L921.3,568.4 L922.3,566.0 L923.3,561.7 L924.3,562.3 L925.3,558.2 L926.3,558.5 L927.3,561.2 L928.3,562.6 L929.3,564.0 L930.4,564.1 L931.4,566.5 L932.4,566.8 L933.4,570.2 L934.4,570.3 L935.4,569.3 L936.4,569.0 L937.4,566.9 L938.4,568.3 L939.4,566.1 L940.4,566.2 L941.4,564.2 L942.4,564.3 L943.4,565.1 L944.4,565.6 L945.5,567.4 L946.5,565.8 L947.5,568.8 L948.5,566.3 L949.5,568.3 L950.5,567.8 L951.5,564.9 L952.5,565.5 L953.5,564.1 L954.5,563.3 L955.5,558.0 L956.5,561.3 L957.5,556.4 L958.5,558.1 L959.5,556.2 L960.5,555.7 L961.5,558.1 L962.5,555.9 L963.5,557.6 L964.5,557.2 L965.6,558.8 L966.6,557.6 L967.6,559.2 L968.6,558.2 L969.6,559.2 L970.6,558.4 L971.7,554.2 L972.8,554.1 L973.8,548.2 L974.9,549.5 L975.9,544.3 L977.0,545.5 L978.0,540.9 L979.0,541.9 L980.0,542.8 L981.0,541.5 L982.0,546.4 L983.0,545.9 L984.0,540.0 L985.0,538.1 L986.0,532.8 L987.0,530.8 L988.0,530.4 L989.0,528.5 L990.0,527.8 L991.0,525.4 L992.1,526.3 L993.1,522.3 L994.1,521.1 L995.1,519.7 L996.1,518.7 L997.1,522.2 L998.1,526.0 L999.2,528.7 L1000.2,531.6 L1001.2,535.3 L1002.2,538.9 L1003.2,531.1 L1004.2,524.3 L1005.2,514.9 L1006.2,508.7 L1007.2,507.5 L1008.2,504.9 L1009.2,506.9 L1010.2,504.0 L1011.2,503.9 L1012.2,502.7 L1013.2,496.1 L1014.2,496.2 L1015.2,491.2 L1016.2,488.6 L1017.2,486.2 L1018.2,479.1 L1019.3,482.2 L1020.3,477.2 L1021.3,474.5 L1022.3,473.7 L1023.3,469.9 L1024.3,468.7 L1025.3,465.0 L1026.3,465.5 L1027.3,460.8 L1028.3,460.4 L1029.3,461.1 L1030.3,458.3 L1031.3,461.5 L1032.3,459.3 L1033.4,460.3 L1034.4,460.4 L1035.4,461.1 L1036.4,460.4 L1037.4,457.1 L1038.4,455.3 L1039.4,452.4 L1040.4,450.8 L1041.4,451.1 L1042.4,450.2 L1043.4,449.9 L1044.4,447.8 L1045.4,447.8 L1046.4,446.4 L1047.4,449.9 L1048.4,458.7 L1049.4,458.4 L1050.4,452.9 L1051.4,448.1 L1052.4,440.2 L1053.4,435.3 L1054.4,437.1 L1055.4,434.1 L1056.4,437.4 L1057.5,432.1 L1058.5,438.5 L1059.5,435.7 L1060.5,436.3 L1061.5,436.8 L1062.5,435.6 L1063.5,437.5 L1064.5,435.3 L1065.5,435.9 L1066.5,434.6 L1067.5,436.6 L1068.5,434.3 L1069.5,434.7 L1070.5,440.1 L1071.5,437.8 L1072.5,441.3 L1073.5,440.0 L1074.5,436.3 L1075.5,435.7 L1076.6,433.7 L1077.6,432.7 L1078.6,430.3 L1079.6,430.4 L1080.6,432.1 L1081.6,431.7 L1082.6,433.9 L1083.6,432.5 L1084.6,434.3 L1085.6,432.9 L1086.6,428.9 L1087.7,426.2 L1088.7,423.6 L1089.7,422.4 L1090.7,419.2 L1091.7,418.4 L1092.7,419.7 L1093.7,417.1 L1094.7,419.8 L1095.7,417.0 L1096.7,417.8 L1097.7,413.9 L1098.7,415.2 L1099.7,417.0 L1100.7,412.4 L1101.7,410.6 L1102.7,409.6 L1103.7,408.5 L1104.7,406.1 L1105.7,408.4 L1106.7,411.5 L1107.8,412.0 L1108.8,415.7 L1109.8,415.3 L1110.8,420.2 L1111.8,422.0 L1112.8,421.2 L1113.8,426.5 L1114.8,424.4 L1115.8,426.9 L1116.8,427.6 L1117.8,429.3 L1118.8,428.2 L1119.8,424.9 L1120.8,423.8 L1121.8,419.5 L1122.8,419.2 L1123.8,421.5 L1124.8,419.3 L1125.8,424.1 L1126.8,426.2 L1127.9,459.4 L1128.9,455.4 L1129.9,457.6 L1130.9,451.5 L1131.9,451.7 L1132.9,447.1 L1133.9,448.2 L1134.9,444.3 L1135.9,445.2 L1136.9,448.4 L1137.9,448.0 L1138.9,452.6 L1139.9,452.3 L1140.9,455.4 L1141.9,456.9 L1142.9,458.3 L1143.9,460.8 L1144.9,460.4 L1145.9,456.0 L1147.0,454.4 L1148.0,448.0 L1149.0,446.4 L1150.0,447.0 L1151.0,442.9 L1152.0,442.4 L1153.0,440.3 L1154.0,441.5 L1155.0,445.5 L1156.0,446.5 L1157.0,451.4 L1158.0,448.6 L1159.0,453.4 L1160.0,458.9 L1161.0,457.0 L1162.0,459.3 L1163.0,460.2 L1164.1,462.0 L1165.1,463.3 L1166.1,465.5 L1167.1,464.9 L1168.1,468.5 L1169.1,464.3 L1170.1,458.1 L1171.1,454.4 L1172.1,460.5 L1173.1,463.7 L1174.1,471.7 L1175.1,476.5 L1176.1,470.0 L1177.1,466.9 L1178.1,462.7 L1179.1,459.6 L1180.1,453.4 L1181.1,454.2 L1182.2,459.5 L1183.2,460.4 L1184.2,452.0 L1185.2,451.1 L1186.2,444.4 L1187.2,439.9 L1188.2,433.2 L1189.2,427.3 L1190.2,426.5 L1191.2,424.2 L1192.2,424.0 L1193.2,423.4 L1194.2,423.9 L1195.2,419.6 L1196.2,422.3 L1197.2,420.2 L1198.2,416.8 L1199.2,415.5 L1200.2,412.2 L1201.2,412.6 L1202.2,416.1 L1203.2,414.4 L1204.2,418.6 L1205.3,417.6 L1206.3,421.7 L1207.3,421.0 L1208.3,423.2 L1209.3,419.7 L1210.3,412.9 L1211.3,414.1 L1212.3,407.7 L1213.3,405.1 L1214.3,407.5 L1215.3,406.3 L1216.3,412.0 L1217.3,409.1 L1218.3,411.8 L1219.3,410.0 L1220.3,414.2 L1221.5,410.6 L1222.7,403.0 L1223.8,401.2 L1225.0,393.9 L1226.1,392.5 L1227.2,391.9 L1228.3,389.0 L1229.5,389.2 L1230.6,384.2 L1231.7,384.6 L1232.9,387.4 L1234.1,387.1 L1235.2,391.4 L1236.4,391.9 L1237.4,387.8 L1238.4,390.3 L1239.4,385.4 L1240.4,384.6 L1241.6,383.9 L1242.7,379.5 L1243.8,379.5 L1245.0,376.5 L1246.1,377.0 L1247.3,379.2 L1248.4,378.8 L1249.5,380.8 L1250.7,381.8 L1251.8,383.2 L1252.9,381.6 L1254.0,376.9 L1255.2,376.0 L1256.3,372.8 L1257.4,372.3 L1258.5,368.5 L1259.7,366.5 L1260.8,367.6 L1262.0,365.4 L1263.2,364.5 L1264.2,368.5 L1265.2,367.5 L1266.2,371.8 L1267.2,372.5 L1268.3,366.6 L1269.4,364.0 L1270.5,356.4 L1271.6,352.3 L1272.7,353.9 L1273.8,350.1 L1275.0,351.6 L1276.1,346.7 L1277.2,345.0 L1278.3,346.5 L1279.4,345.2 L1280.4,350.4 L1281.5,348.2 L1282.6,349.7 L1283.7,351.0 L1284.8,352.4 L1285.8,355.7 L1286.9,355.1 L1288.0,357.7 L1289.0,358.8 L1290.1,353.9 L1291.1,354.7 L1292.1,352.5 L1293.2,352.1 L1294.2,348.9 L1295.2,347.8 L1296.3,345.8 L1297.3,345.7 L1298.5,348.5 L1299.7,347.8 L1300.8,355.3 L1302.0,356.4 L1303.0,353.1 L1304.0,351.4 L1305.0,347.7 L1306.0,346.7 L1307.0,341.5 L1308.0,339.0 L1309.3,340.8 L1310.7,341.7 L1311.9,338.0 L1313.1,336.4 L1314.2,333.5 L1315.4,330.3 L1316.4,334.3 L1317.4,330.1 L1318.5,333.1 L1319.5,330.5 L1320.5,334.2 L1321.5,332.3 L1322.8,344.3 L1324.0,336.9 L1325.2,334.5 L1326.3,326.0 L1327.5,320.2 L1328.5,318.7 L1329.5,314.1 L1330.5,310.8 L1331.5,308.2 L1332.8,314.1 L1334.2,325.6 L1335.2,321.0 L1336.2,315.0 L1337.2,310.4 L1338.2,304.9 L1339.2,302.1 L1340.2,296.1 L1341.4,299.2 L1342.6,305.1 L1343.7,304.8 L1344.9,309.5 L1346.2,302.4 L1347.6,294.1 L1348.7,295.6 L1349.7,299.1 L1350.8,298.6 L1351.8,301.8 L1352.9,300.2 L1353.9,303.0 L1355.0,304.1 L1356.3,296.5 L1357.7,290.7 L1359.0,291.0 L1360.3,291.4 L1360.3,832.5 L110.8,832.5 Z" fill="rgba(100,226,34,0.52)" clip-path="url(#above)"/><path d="M110.8,832.0 L112.0,830.0 L113.3,831.5 L114.5,829.8 L115.8,825.2 L117.0,823.8 L118.0,826.6 L119.0,825.0 L120.0,828.8 L121.7,813.7 L122.8,814.9 L123.8,812.7 L124.9,814.1 L126.0,814.3 L127.0,811.1 L128.0,814.7 L129.0,814.3 L130.0,814.3 L131.0,816.2 L132.0,817.3 L133.0,820.2 L134.0,818.5 L135.0,821.8 L136.0,821.9 L137.0,817.0 L138.0,818.3 L139.0,815.7 L140.0,813.0 L141.0,818.7 L142.0,819.7 L143.0,818.4 L144.0,817.5 L145.0,815.3 L146.0,815.0 L147.0,811.0 L148.0,813.0 L149.0,809.5 L150.0,809.7 L151.0,811.1 L152.0,809.0 L153.0,810.2 L154.0,810.0 L155.0,812.7 L156.0,810.8 L157.0,811.9 L158.0,811.7 L159.0,810.7 L160.0,811.8 L161.0,810.4 L162.0,811.6 L163.0,808.9 L164.0,809.6 L165.0,806.3 L166.0,810.0 L167.0,807.7 L168.0,809.4 L169.0,811.2 L170.0,810.2 L171.0,813.7 L172.0,814.5 L173.0,813.6 L174.0,814.8 L175.0,814.7 L176.2,820.8 L177.4,828.8 L178.4,827.5 L179.4,824.3 L180.4,822.8 L181.4,837.9 L182.4,837.7 L183.5,832.6 L184.5,833.8 L185.5,834.8 L186.5,832.4 L187.5,835.6 L188.5,835.8 L189.5,831.8 L190.5,832.6 L191.5,827.8 L192.5,827.6 L193.5,830.8 L194.5,829.2 L195.5,823.7 L196.5,825.1 L197.5,822.8 L198.5,819.8 L199.5,820.0 L200.5,818.9 L201.6,819.7 L202.6,815.9 L203.6,818.5 L204.6,817.7 L205.6,817.6 L206.6,820.2 L207.6,819.7 L208.6,820.8 L209.6,823.0 L210.6,822.7 L211.6,827.1 L212.6,824.1 L213.6,827.2 L214.6,828.4 L215.6,829.8 L216.6,833.5 L217.6,829.6 L218.6,832.8 L219.6,835.5 L220.6,832.8 L221.6,839.2 L222.6,835.3 L223.7,836.4 L224.7,837.3 L225.7,838.7 L226.7,839.5 L227.7,840.9 L228.7,839.2 L229.7,833.4 L230.7,831.8 L231.7,832.6 L232.7,831.1 L233.7,833.6 L234.7,832.8 L235.7,830.4 L236.7,832.7 L237.7,828.4 L238.7,827.8 L239.7,826.9 L240.7,825.2 L241.7,828.7 L242.7,824.7 L243.8,826.7 L244.8,824.4 L245.8,826.3 L246.8,824.7 L247.8,825.5 L248.8,823.8 L249.8,822.1 L250.8,821.3 L251.8,816.5 L252.8,816.7 L253.8,818.7 L254.8,817.8 L255.8,818.1 L256.9,817.6 L257.9,820.0 L258.9,819.3 L259.9,820.7 L260.9,820.8 L261.9,818.6 L262.9,820.5 L263.9,819.0 L264.9,820.2 L265.9,817.6 L266.9,818.7 L267.9,821.8 L268.9,819.9 L269.9,822.9 L270.9,823.8 L271.9,822.3 L272.9,821.2 L273.9,820.3 L275.0,819.7 L276.0,817.7 L277.0,816.7 L278.0,816.1 L279.0,815.1 L280.0,815.0 L281.0,812.0 L282.0,812.8 L283.0,811.6 L284.0,812.2 L285.0,810.7 L286.0,807.4 L287.0,806.5 L288.0,805.0 L289.0,802.5 L290.0,798.6 L291.0,800.8 L292.0,796.6 L293.0,798.2 L294.0,802.3 L295.0,802.6 L296.0,806.3 L297.0,806.7 L298.0,810.5 L299.0,811.7 L300.0,808.8 L301.0,809.0 L302.0,806.1 L303.0,806.6 L304.0,805.0 L305.0,806.2 L306.0,801.7 L307.0,801.0 L308.0,807.0 L309.0,805.5 L310.0,809.5 L311.0,809.7 L312.0,806.7 L313.0,808.4 L314.0,807.0 L315.0,806.4 L316.0,805.4 L317.0,805.6 L318.0,802.1 L319.0,803.6 L320.0,801.0 L321.0,801.7 L322.0,801.0 L323.0,799.8 L324.0,799.6 L325.0,795.7 L326.0,796.3 L327.0,794.9 L328.0,794.3 L329.0,792.6 L330.0,793.5 L331.0,795.1 L332.0,793.5 L333.0,796.3 L334.0,795.6 L335.0,793.6 L336.0,793.4 L337.0,789.1 L338.0,788.6 L339.0,789.3 L340.0,787.6 L341.0,788.7 L342.0,784.3 L343.0,787.7 L344.0,786.1 L345.0,786.3 L346.0,785.0 L347.0,785.6 L348.0,789.1 L349.0,789.4 L350.0,792.3 L351.0,794.6 L352.0,793.9 L353.0,793.1 L354.0,791.9 L355.0,791.6 L356.0,790.6 L357.0,785.0 L358.0,782.6 L359.1,782.9 L360.1,781.2 L361.2,783.8 L362.2,781.8 L363.3,783.8 L364.3,781.2 L365.4,782.6 L366.4,781.8 L367.4,779.3 L368.4,778.1 L369.4,776.6 L370.5,778.6 L371.5,776.1 L372.5,774.3 L373.5,773.4 L374.5,771.5 L375.5,772.4 L376.5,771.6 L377.5,773.2 L378.5,772.8 L379.5,774.5 L380.5,773.6 L381.5,768.9 L382.5,769.8 L383.5,767.5 L384.5,766.1 L385.5,770.6 L386.6,769.5 L387.6,770.5 L388.6,769.3 L389.6,771.5 L390.6,770.7 L391.6,769.0 L392.6,768.4 L393.6,765.9 L394.6,768.4 L395.6,762.1 L396.6,763.8 L397.6,761.4 L398.7,761.8 L399.7,765.0 L400.8,765.1 L401.9,769.5 L402.9,769.6 L404.0,772.0 L405.0,771.3 L406.0,769.3 L407.0,769.4 L408.0,767.0 L409.0,766.4 L410.0,769.5 L411.0,768.5 L412.0,771.0 L413.0,771.8 L414.0,769.5 L415.0,766.5 L416.0,766.0 L417.0,765.8 L418.0,768.9 L419.0,766.9 L420.0,768.8 L421.0,770.0 L422.0,767.2 L423.0,766.2 L424.0,761.4 L425.0,760.0 L426.0,758.8 L427.0,757.4 L428.0,754.9 L429.0,751.6 L430.0,752.3 L431.0,747.8 L432.0,747.8 L433.0,749.6 L434.0,751.6 L435.0,754.8 L436.0,756.4 L437.0,758.8 L438.0,760.0 L439.0,759.2 L440.0,760.1 L441.0,756.9 L442.0,757.9 L443.0,760.0 L444.0,757.6 L445.0,760.0 L446.0,757.3 L447.0,752.6 L448.0,755.1 L449.0,749.2 L450.0,746.8 L451.1,747.5 L452.1,745.4 L453.2,746.3 L454.3,744.8 L455.3,743.6 L456.3,746.8 L457.4,744.9 L458.4,748.0 L459.4,747.3 L460.4,747.8 L461.4,748.1 L462.4,747.7 L463.4,750.9 L464.4,748.2 L465.4,751.3 L466.4,746.8 L467.4,750.3 L468.5,748.0 L469.5,751.7 L470.5,748.4 L471.5,751.4 L472.5,748.9 L473.5,750.2 L474.5,749.8 L475.5,750.3 L476.5,751.4 L477.5,749.9 L478.5,752.8 L479.5,751.0 L480.5,752.5 L481.5,750.3 L482.5,753.5 L483.5,753.1 L484.5,754.8 L485.5,755.3 L486.5,756.2 L487.5,757.4 L488.5,756.4 L489.5,758.7 L490.5,759.9 L491.5,760.8 L492.6,760.5 L493.6,758.0 L494.6,757.9 L495.6,758.9 L496.6,758.0 L497.6,759.3 L498.6,758.1 L499.6,761.0 L500.6,759.9 L501.6,757.8 L502.6,757.6 L503.6,754.3 L504.6,753.8 L505.6,754.2 L506.6,751.9 L507.6,752.7 L508.6,752.0 L509.7,752.3 L510.7,748.7 L511.7,753.0 L512.7,750.2 L513.7,752.3 L514.7,750.8 L515.7,748.6 L516.7,749.7 L517.7,746.9 L518.7,747.6 L519.7,746.5 L520.7,747.1 L521.7,744.5 L522.7,743.9 L523.7,743.7 L524.7,742.8 L525.7,745.8 L526.7,745.0 L527.8,746.2 L528.8,744.5 L529.8,748.8 L530.8,748.5 L531.8,745.8 L532.8,746.4 L533.8,741.6 L534.8,743.7 L535.8,741.7 L536.8,742.3 L537.8,740.0 L538.8,738.8 L539.8,737.3 L540.8,734.7 L541.8,736.3 L542.8,732.3 L543.8,733.4 L544.8,728.8 L545.8,730.6 L546.8,727.7 L547.8,726.5 L548.8,727.8 L549.8,724.9 L550.9,723.5 L551.9,722.4 L552.9,722.7 L553.9,724.1 L554.9,720.9 L555.9,722.4 L556.9,720.7 L557.9,721.2 L558.9,727.2 L559.9,728.7 L560.9,727.7 L561.9,731.9 L562.9,730.2 L564.0,732.9 L565.0,731.5 L566.0,734.4 L567.0,734.7 L568.0,731.8 L569.0,734.7 L570.0,730.5 L571.0,731.7 L572.0,733.3 L573.0,734.6 L574.0,736.7 L575.0,733.8 L576.0,733.3 L577.0,732.9 L578.0,730.9 L579.0,730.0 L580.0,726.5 L581.0,725.6 L582.0,723.2 L583.0,722.7 L584.0,724.2 L585.0,721.7 L586.0,722.6 L587.0,722.3 L588.0,722.0 L589.0,721.2 L590.0,722.6 L591.0,720.7 L592.0,722.1 L593.0,723.5 L594.0,725.8 L595.0,727.0 L596.0,727.7 L597.0,723.1 L598.0,725.8 L599.0,721.1 L600.0,722.0 L601.0,720.7 L602.0,716.4 L603.0,717.1 L604.0,711.4 L605.0,710.8 L606.0,706.6 L607.0,707.6 L608.0,709.9 L609.0,711.9 L610.0,714.6 L611.0,715.6 L612.0,712.0 L613.0,712.5 L614.0,709.6 L615.0,708.8 L616.0,702.5 L617.0,702.6 L618.0,702.1 L619.0,699.9 L620.0,699.4 L621.0,697.3 L622.0,698.9 L623.0,696.5 L624.0,696.3 L625.0,697.9 L626.0,698.3 L627.0,699.8 L628.0,700.5 L629.1,693.9 L630.2,692.5 L631.3,685.5 L632.3,684.5 L633.3,684.6 L634.3,680.7 L635.3,683.2 L636.3,680.4 L637.3,676.5 L638.3,677.3 L639.4,669.3 L640.4,668.7 L641.4,664.3 L642.4,664.4 L643.4,666.7 L644.4,662.7 L645.4,667.0 L646.4,666.7 L647.4,668.4 L648.4,669.1 L649.4,666.9 L650.4,667.8 L651.4,665.5 L652.4,664.0 L653.4,661.9 L654.4,662.5 L655.4,661.5 L656.4,661.6 L657.4,660.3 L658.4,655.1 L659.5,653.9 L660.5,649.3 L661.5,651.6 L662.5,657.6 L663.5,660.3 L664.5,655.5 L665.5,651.4 L666.5,646.2 L667.5,644.8 L668.5,647.9 L669.5,645.0 L670.5,647.3 L671.5,646.1 L672.5,648.2 L673.5,646.2 L674.5,648.8 L675.5,656.2 L676.6,659.7 L677.6,667.1 L678.6,670.4 L679.6,666.4 L680.6,665.6 L681.6,658.8 L682.6,658.5 L683.6,653.3 L684.7,649.7 L685.7,650.7 L686.8,646.9 L687.8,646.9 L688.9,642.1 L689.9,643.6 L691.0,639.6 L692.0,640.6 L693.0,644.1 L694.0,642.9 L695.0,646.7 L696.0,646.3 L697.0,640.9 L698.0,638.6 L699.0,643.6 L700.0,641.3 L701.0,645.2 L702.0,645.7 L703.0,649.2 L704.0,657.1 L705.0,658.0 L706.0,663.8 L707.0,661.4 L708.0,655.0 L709.0,650.7 L710.0,644.7 L711.0,640.7 L712.0,639.1 L713.0,636.0 L714.1,637.4 L715.1,631.7 L716.1,630.9 L717.1,627.9 L718.2,626.6 L719.2,624.7 L720.2,622.6 L721.2,626.6 L722.2,627.5 L723.2,632.0 L724.2,632.8 L725.2,636.9 L726.2,639.6 L727.2,637.5 L728.2,638.0 L729.2,634.0 L730.3,634.4 L731.3,631.2 L732.3,630.6 L733.3,636.8 L734.3,632.9 L735.3,638.5 L736.3,636.5 L737.3,642.9 L738.3,643.7 L739.3,639.5 L740.3,639.5 L741.3,635.4 L742.3,634.6 L743.3,633.3 L744.3,632.5 L745.3,632.4 L746.4,630.7 L747.4,631.6 L748.4,629.6 L749.4,627.5 L750.4,629.2 L751.4,627.8 L752.4,627.3 L753.4,623.1 L754.4,626.2 L755.4,623.7 L756.4,624.6 L757.4,626.6 L758.4,623.5 L759.4,629.5 L760.5,627.5 L761.5,629.0 L762.5,630.2 L763.5,631.1 L764.5,631.6 L765.5,627.5 L766.5,629.3 L767.5,626.0 L768.5,624.6 L769.5,629.3 L770.5,628.6 L771.5,633.1 L772.5,631.9 L773.5,634.6 L774.5,635.4 L775.5,631.8 L776.5,631.8 L777.5,629.9 L778.5,631.3 L779.5,628.8 L780.5,627.6 L781.5,626.7 L782.6,621.7 L783.6,619.5 L784.6,618.7 L785.6,615.9 L786.6,617.9 L787.6,615.4 L788.6,617.5 L789.6,616.8 L790.6,615.9 L791.6,615.5 L792.6,613.3 L793.6,611.4 L794.6,608.2 L795.6,607.5 L796.6,604.5 L797.6,607.8 L798.6,611.8 L799.6,613.9 L800.6,616.5 L801.6,617.8 L802.6,610.7 L803.7,609.8 L804.7,606.1 L805.7,605.7 L806.7,602.4 L807.7,602.0 L808.7,602.5 L809.7,603.4 L810.7,605.2 L811.7,603.1 L812.7,605.8 L813.7,602.6 L814.7,604.8 L815.7,602.4 L816.7,604.5 L817.7,604.2 L818.8,599.6 L819.8,600.7 L820.8,596.4 L821.8,593.9 L822.8,594.2 L823.8,591.8 L824.8,591.3 L825.8,589.4 L826.8,587.4 L827.8,588.2 L828.8,588.6 L829.8,588.6 L830.8,586.9 L831.8,587.9 L832.8,586.4 L833.8,584.6 L834.8,588.6 L835.9,587.5 L836.9,591.0 L837.9,590.4 L838.9,586.4 L839.9,583.8 L840.9,576.3 L841.9,575.0 L842.9,576.8 L843.9,577.0 L844.9,578.8 L845.9,576.5 L846.9,578.3 L847.9,576.8 L848.9,572.2 L849.9,572.0 L850.9,568.6 L851.9,566.8 L852.9,564.2 L853.9,564.6 L854.9,567.8 L855.9,568.0 L857.0,571.8 L858.0,570.4 L859.0,574.7 L860.0,573.1 L861.0,575.3 L862.0,574.9 L863.0,573.3 L864.0,573.6 L865.0,568.7 L866.0,570.9 L867.0,571.1 L868.0,570.8 L869.0,569.3 L870.0,565.6 L871.0,567.8 L872.0,563.7 L873.1,565.4 L874.1,562.4 L875.1,563.2 L876.1,560.2 L877.1,560.7 L878.1,564.9 L879.1,565.1 L880.1,570.4 L881.1,570.3 L882.1,570.8 L883.1,572.2 L884.1,571.2 L885.1,572.5 L886.1,572.0 L887.1,572.3 L888.1,572.1 L889.1,567.5 L890.1,566.7 L891.1,564.2 L892.1,562.9 L893.1,563.5 L894.1,562.9 L895.2,565.3 L896.2,561.5 L897.2,562.3 L898.2,561.2 L899.2,563.0 L900.2,566.6 L901.2,570.0 L902.2,574.2 L903.2,576.3 L904.2,575.4 L905.2,579.5 L906.2,578.1 L907.2,579.3 L908.2,578.0 L909.2,574.2 L910.3,572.7 L911.3,570.3 L912.3,571.6 L913.3,573.5 L914.3,573.7 L915.3,575.2 L916.3,576.7 L917.3,578.3 L918.3,576.9 L919.3,572.6 L920.3,571.1 L921.3,568.4 L922.3,566.0 L923.3,561.7 L924.3,562.3 L925.3,558.2 L926.3,558.5 L927.3,561.2 L928.3,562.6 L929.3,564.0 L930.4,564.1 L931.4,566.5 L932.4,566.8 L933.4,570.2 L934.4,570.3 L935.4,569.3 L936.4,569.0 L937.4,566.9 L938.4,568.3 L939.4,566.1 L940.4,566.2 L941.4,564.2 L942.4,564.3 L943.4,565.1 L944.4,565.6 L945.5,567.4 L946.5,565.8 L947.5,568.8 L948.5,566.3 L949.5,568.3 L950.5,567.8 L951.5,564.9 L952.5,565.5 L953.5,564.1 L954.5,563.3 L955.5,558.0 L956.5,561.3 L957.5,556.4 L958.5,558.1 L959.5,556.2 L960.5,555.7 L961.5,558.1 L962.5,555.9 L963.5,557.6 L964.5,557.2 L965.6,558.8 L966.6,557.6 L967.6,559.2 L968.6,558.2 L969.6,559.2 L970.6,558.4 L971.7,554.2 L972.8,554.1 L973.8,548.2 L974.9,549.5 L975.9,544.3 L977.0,545.5 L978.0,540.9 L979.0,541.9 L980.0,542.8 L981.0,541.5 L982.0,546.4 L983.0,545.9 L984.0,540.0 L985.0,538.1 L986.0,532.8 L987.0,530.8 L988.0,530.4 L989.0,528.5 L990.0,527.8 L991.0,525.4 L992.1,526.3 L993.1,522.3 L994.1,521.1 L995.1,519.7 L996.1,518.7 L997.1,522.2 L998.1,526.0 L999.2,528.7 L1000.2,531.6 L1001.2,535.3 L1002.2,538.9 L1003.2,531.1 L1004.2,524.3 L1005.2,514.9 L1006.2,508.7 L1007.2,507.5 L1008.2,504.9 L1009.2,506.9 L1010.2,504.0 L1011.2,503.9 L1012.2,502.7 L1013.2,496.1 L1014.2,496.2 L1015.2,491.2 L1016.2,488.6 L1017.2,486.2 L1018.2,479.1 L1019.3,482.2 L1020.3,477.2 L1021.3,474.5 L1022.3,473.7 L1023.3,469.9 L1024.3,468.7 L1025.3,465.0 L1026.3,465.5 L1027.3,460.8 L1028.3,460.4 L1029.3,461.1 L1030.3,458.3 L1031.3,461.5 L1032.3,459.3 L1033.4,460.3 L1034.4,460.4 L1035.4,461.1 L1036.4,460.4 L1037.4,457.1 L1038.4,455.3 L1039.4,452.4 L1040.4,450.8 L1041.4,451.1 L1042.4,450.2 L1043.4,449.9 L1044.4,447.8 L1045.4,447.8 L1046.4,446.4 L1047.4,449.9 L1048.4,458.7 L1049.4,458.4 L1050.4,452.9 L1051.4,448.1 L1052.4,440.2 L1053.4,435.3 L1054.4,437.1 L1055.4,434.1 L1056.4,437.4 L1057.5,432.1 L1058.5,438.5 L1059.5,435.7 L1060.5,436.3 L1061.5,436.8 L1062.5,435.6 L1063.5,437.5 L1064.5,435.3 L1065.5,435.9 L1066.5,434.6 L1067.5,436.6 L1068.5,434.3 L1069.5,434.7 L1070.5,440.1 L1071.5,437.8 L1072.5,441.3 L1073.5,440.0 L1074.5,436.3 L1075.5,435.7 L1076.6,433.7 L1077.6,432.7 L1078.6,430.3 L1079.6,430.4 L1080.6,432.1 L1081.6,431.7 L1082.6,433.9 L1083.6,432.5 L1084.6,434.3 L1085.6,432.9 L1086.6,428.9 L1087.7,426.2 L1088.7,423.6 L1089.7,422.4 L1090.7,419.2 L1091.7,418.4 L1092.7,419.7 L1093.7,417.1 L1094.7,419.8 L1095.7,417.0 L1096.7,417.8 L1097.7,413.9 L1098.7,415.2 L1099.7,417.0 L1100.7,412.4 L1101.7,410.6 L1102.7,409.6 L1103.7,408.5 L1104.7,406.1 L1105.7,408.4 L1106.7,411.5 L1107.8,412.0 L1108.8,415.7 L1109.8,415.3 L1110.8,420.2 L1111.8,422.0 L1112.8,421.2 L1113.8,426.5 L1114.8,424.4 L1115.8,426.9 L1116.8,427.6 L1117.8,429.3 L1118.8,428.2 L1119.8,424.9 L1120.8,423.8 L1121.8,419.5 L1122.8,419.2 L1123.8,421.5 L1124.8,419.3 L1125.8,424.1 L1126.8,426.2 L1127.9,459.4 L1128.9,455.4 L1129.9,457.6 L1130.9,451.5 L1131.9,451.7 L1132.9,447.1 L1133.9,448.2 L1134.9,444.3 L1135.9,445.2 L1136.9,448.4 L1137.9,448.0 L1138.9,452.6 L1139.9,452.3 L1140.9,455.4 L1141.9,456.9 L1142.9,458.3 L1143.9,460.8 L1144.9,460.4 L1145.9,456.0 L1147.0,454.4 L1148.0,448.0 L1149.0,446.4 L1150.0,447.0 L1151.0,442.9 L1152.0,442.4 L1153.0,440.3 L1154.0,441.5 L1155.0,445.5 L1156.0,446.5 L1157.0,451.4 L1158.0,448.6 L1159.0,453.4 L1160.0,458.9 L1161.0,457.0 L1162.0,459.3 L1163.0,460.2 L1164.1,462.0 L1165.1,463.3 L1166.1,465.5 L1167.1,464.9 L1168.1,468.5 L1169.1,464.3 L1170.1,458.1 L1171.1,454.4 L1172.1,460.5 L1173.1,463.7 L1174.1,471.7 L1175.1,476.5 L1176.1,470.0 L1177.1,466.9 L1178.1,462.7 L1179.1,459.6 L1180.1,453.4 L1181.1,454.2 L1182.2,459.5 L1183.2,460.4 L1184.2,452.0 L1185.2,451.1 L1186.2,444.4 L1187.2,439.9 L1188.2,433.2 L1189.2,427.3 L1190.2,426.5 L1191.2,424.2 L1192.2,424.0 L1193.2,423.4 L1194.2,423.9 L1195.2,419.6 L1196.2,422.3 L1197.2,420.2 L1198.2,416.8 L1199.2,415.5 L1200.2,412.2 L1201.2,412.6 L1202.2,416.1 L1203.2,414.4 L1204.2,418.6 L1205.3,417.6 L1206.3,421.7 L1207.3,421.0 L1208.3,423.2 L1209.3,419.7 L1210.3,412.9 L1211.3,414.1 L1212.3,407.7 L1213.3,405.1 L1214.3,407.5 L1215.3,406.3 L1216.3,412.0 L1217.3,409.1 L1218.3,411.8 L1219.3,410.0 L1220.3,414.2 L1221.5,410.6 L1222.7,403.0 L1223.8,401.2 L1225.0,393.9 L1226.1,392.5 L1227.2,391.9 L1228.3,389.0 L1229.5,389.2 L1230.6,384.2 L1231.7,384.6 L1232.9,387.4 L1234.1,387.1 L1235.2,391.4 L1236.4,391.9 L1237.4,387.8 L1238.4,390.3 L1239.4,385.4 L1240.4,384.6 L1241.6,383.9 L1242.7,379.5 L1243.8,379.5 L1245.0,376.5 L1246.1,377.0 L1247.3,379.2 L1248.4,378.8 L1249.5,380.8 L1250.7,381.8 L1251.8,383.2 L1252.9,381.6 L1254.0,376.9 L1255.2,376.0 L1256.3,372.8 L1257.4,372.3 L1258.5,368.5 L1259.7,366.5 L1260.8,367.6 L1262.0,365.4 L1263.2,364.5 L1264.2,368.5 L1265.2,367.5 L1266.2,371.8 L1267.2,372.5 L1268.3,366.6 L1269.4,364.0 L1270.5,356.4 L1271.6,352.3 L1272.7,353.9 L1273.8,350.1 L1275.0,351.6 L1276.1,346.7 L1277.2,345.0 L1278.3,346.5 L1279.4,345.2 L1280.4,350.4 L1281.5,348.2 L1282.6,349.7 L1283.7,351.0 L1284.8,352.4 L1285.8,355.7 L1286.9,355.1 L1288.0,357.7 L1289.0,358.8 L1290.1,353.9 L1291.1,354.7 L1292.1,352.5 L1293.2,352.1 L1294.2,348.9 L1295.2,347.8 L1296.3,345.8 L1297.3,345.7 L1298.5,348.5 L1299.7,347.8 L1300.8,355.3 L1302.0,356.4 L1303.0,353.1 L1304.0,351.4 L1305.0,347.7 L1306.0,346.7 L1307.0,341.5 L1308.0,339.0 L1309.3,340.8 L1310.7,341.7 L1311.9,338.0 L1313.1,336.4 L1314.2,333.5 L1315.4,330.3 L1316.4,334.3 L1317.4,330.1 L1318.5,333.1 L1319.5,330.5 L1320.5,334.2 L1321.5,332.3 L1322.8,344.3 L1324.0,336.9 L1325.2,334.5 L1326.3,326.0 L1327.5,320.2 L1328.5,318.7 L1329.5,314.1 L1330.5,310.8 L1331.5,308.2 L1332.8,314.1 L1334.2,325.6 L1335.2,321.0 L1336.2,315.0 L1337.2,310.4 L1338.2,304.9 L1339.2,302.1 L1340.2,296.1 L1341.4,299.2 L1342.6,305.1 L1343.7,304.8 L1344.9,309.5 L1346.2,302.4 L1347.6,294.1 L1348.7,295.6 L1349.7,299.1 L1350.8,298.6 L1351.8,301.8 L1352.9,300.2 L1353.9,303.0 L1355.0,304.1 L1356.3,296.5 L1357.7,290.7 L1359.0,291.0 L1360.3,291.4 L1360.3,832.5 L110.8,832.5 Z" fill="rgba(235,30,30,0.75)" clip-path="url(#below)"/><path d="M110.8,832.0 L112.0,830.0 L113.3,831.5 L114.5,829.8 L115.8,825.2 L117.0,823.8 L118.0,826.6 L119.0,825.0 L120.0,828.8 L121.7,813.7 L122.8,814.9 L123.8,812.7 L124.9,814.1 L126.0,814.3 L127.0,811.1 L128.0,814.7 L129.0,814.3 L130.0,814.3 L131.0,816.2 L132.0,817.3 L133.0,820.2 L134.0,818.5 L135.0,821.8 L136.0,821.9 L137.0,817.0 L138.0,818.3 L139.0,815.7 L140.0,813.0 L141.0,818.7 L142.0,819.7 L143.0,818.4 L144.0,817.5 L145.0,815.3 L146.0,815.0 L147.0,811.0 L148.0,813.0 L149.0,809.5 L150.0,809.7 L151.0,811.1 L152.0,809.0 L153.0,810.2 L154.0,810.0 L155.0,812.7 L156.0,810.8 L157.0,811.9 L158.0,811.7 L159.0,810.7 L160.0,811.8 L161.0,810.4 L162.0,811.6 L163.0,808.9 L164.0,809.6 L165.0,806.3 L166.0,810.0 L167.0,807.7 L168.0,809.4 L169.0,811.2 L170.0,810.2 L171.0,813.7 L172.0,814.5 L173.0,813.6 L174.0,814.8 L175.0,814.7 L176.2,820.8 L177.4,828.8 L178.4,827.5 L179.4,824.3 L180.4,822.8 L181.4,837.9 L182.4,837.7 L183.5,832.6 L184.5,833.8 L185.5,834.8 L186.5,832.4 L187.5,835.6 L188.5,835.8 L189.5,831.8 L190.5,832.6 L191.5,827.8 L192.5,827.6 L193.5,830.8 L194.5,829.2 L195.5,823.7 L196.5,825.1 L197.5,822.8 L198.5,819.8 L199.5,820.0 L200.5,818.9 L201.6,819.7 L202.6,815.9 L203.6,818.5 L204.6,817.7 L205.6,817.6 L206.6,820.2 L207.6,819.7 L208.6,820.8 L209.6,823.0 L210.6,822.7 L211.6,827.1 L212.6,824.1 L213.6,827.2 L214.6,828.4 L215.6,829.8 L216.6,833.5 L217.6,829.6 L218.6,832.8 L219.6,835.5 L220.6,832.8 L221.6,839.2 L222.6,835.3 L223.7,836.4 L224.7,837.3 L225.7,838.7 L226.7,839.5 L227.7,840.9 L228.7,839.2 L229.7,833.4 L230.7,831.8 L231.7,832.6 L232.7,831.1 L233.7,833.6 L234.7,832.8 L235.7,830.4 L236.7,832.7 L237.7,828.4 L238.7,827.8 L239.7,826.9 L240.7,825.2 L241.7,828.7 L242.7,824.7 L243.8,826.7 L244.8,824.4 L245.8,826.3 L246.8,824.7 L247.8,825.5 L248.8,823.8 L249.8,822.1 L250.8,821.3 L251.8,816.5 L252.8,816.7 L253.8,818.7 L254.8,817.8 L255.8,818.1 L256.9,817.6 L257.9,820.0 L258.9,819.3 L259.9,820.7 L260.9,820.8 L261.9,818.6 L262.9,820.5 L263.9,819.0 L264.9,820.2 L265.9,817.6 L266.9,818.7 L267.9,821.8 L268.9,819.9 L269.9,822.9 L270.9,823.8 L271.9,822.3 L272.9,821.2 L273.9,820.3 L275.0,819.7 L276.0,817.7 L277.0,816.7 L278.0,816.1 L279.0,815.1 L280.0,815.0 L281.0,812.0 L282.0,812.8 L283.0,811.6 L284.0,812.2 L285.0,810.7 L286.0,807.4 L287.0,806.5 L288.0,805.0 L289.0,802.5 L290.0,798.6 L291.0,800.8 L292.0,796.6 L293.0,798.2 L294.0,802.3 L295.0,802.6 L296.0,806.3 L297.0,806.7 L298.0,810.5 L299.0,811.7 L300.0,808.8 L301.0,809.0 L302.0,806.1 L303.0,806.6 L304.0,805.0 L305.0,806.2 L306.0,801.7 L307.0,801.0 L308.0,807.0 L309.0,805.5 L310.0,809.5 L311.0,809.7 L312.0,806.7 L313.0,808.4 L314.0,807.0 L315.0,806.4 L316.0,805.4 L317.0,805.6 L318.0,802.1 L319.0,803.6 L320.0,801.0 L321.0,801.7 L322.0,801.0 L323.0,799.8 L324.0,799.6 L325.0,795.7 L326.0,796.3 L327.0,794.9 L328.0,794.3 L329.0,792.6 L330.0,793.5 L331.0,795.1 L332.0,793.5 L333.0,796.3 L334.0,795.6 L335.0,793.6 L336.0,793.4 L337.0,789.1 L338.0,788.6 L339.0,789.3 L340.0,787.6 L341.0,788.7 L342.0,784.3 L343.0,787.7 L344.0,786.1 L345.0,786.3 L346.0,785.0 L347.0,785.6 L348.0,789.1 L349.0,789.4 L350.0,792.3 L351.0,794.6 L352.0,793.9 L353.0,793.1 L354.0,791.9 L355.0,791.6 L356.0,790.6 L357.0,785.0 L358.0,782.6 L359.1,782.9 L360.1,781.2 L361.2,783.8 L362.2,781.8 L363.3,783.8 L364.3,781.2 L365.4,782.6 L366.4,781.8 L367.4,779.3 L368.4,778.1 L369.4,776.6 L370.5,778.6 L371.5,776.1 L372.5,774.3 L373.5,773.4 L374.5,771.5 L375.5,772.4 L376.5,771.6 L377.5,773.2 L378.5,772.8 L379.5,774.5 L380.5,773.6 L381.5,768.9 L382.5,769.8 L383.5,767.5 L384.5,766.1 L385.5,770.6 L386.6,769.5 L387.6,770.5 L388.6,769.3 L389.6,771.5 L390.6,770.7 L391.6,769.0 L392.6,768.4 L393.6,765.9 L394.6,768.4 L395.6,762.1 L396.6,763.8 L397.6,761.4 L398.7,761.8 L399.7,765.0 L400.8,765.1 L401.9,769.5 L402.9,769.6 L404.0,772.0 L405.0,771.3 L406.0,769.3 L407.0,769.4 L408.0,767.0 L409.0,766.4 L410.0,769.5 L411.0,768.5 L412.0,771.0 L413.0,771.8 L414.0,769.5 L415.0,766.5 L416.0,766.0 L417.0,765.8 L418.0,768.9 L419.0,766.9 L420.0,768.8 L421.0,770.0 L422.0,767.2 L423.0,766.2 L424.0,761.4 L425.0,760.0 L426.0,758.8 L427.0,757.4 L428.0,754.9 L429.0,751.6 L430.0,752.3 L431.0,747.8 L432.0,747.8 L433.0,749.6 L434.0,751.6 L435.0,754.8 L436.0,756.4 L437.0,758.8 L438.0,760.0 L439.0,759.2 L440.0,760.1 L441.0,756.9 L442.0,757.9 L443.0,760.0 L444.0,757.6 L445.0,760.0 L446.0,757.3 L447.0,752.6 L448.0,755.1 L449.0,749.2 L450.0,746.8 L451.1,747.5 L452.1,745.4 L453.2,746.3 L454.3,744.8 L455.3,743.6 L456.3,746.8 L457.4,744.9 L458.4,748.0 L459.4,747.3 L460.4,747.8 L461.4,748.1 L462.4,747.7 L463.4,750.9 L464.4,748.2 L465.4,751.3 L466.4,746.8 L467.4,750.3 L468.5,748.0 L469.5,751.7 L470.5,748.4 L471.5,751.4 L472.5,748.9 L473.5,750.2 L474.5,749.8 L475.5,750.3 L476.5,751.4 L477.5,749.9 L478.5,752.8 L479.5,751.0 L480.5,752.5 L481.5,750.3 L482.5,753.5 L483.5,753.1 L484.5,754.8 L485.5,755.3 L486.5,756.2 L487.5,757.4 L488.5,756.4 L489.5,758.7 L490.5,759.9 L491.5,760.8 L492.6,760.5 L493.6,758.0 L494.6,757.9 L495.6,758.9 L496.6,758.0 L497.6,759.3 L498.6,758.1 L499.6,761.0 L500.6,759.9 L501.6,757.8 L502.6,757.6 L503.6,754.3 L504.6,753.8 L505.6,754.2 L506.6,751.9 L507.6,752.7 L508.6,752.0 L509.7,752.3 L510.7,748.7 L511.7,753.0 L512.7,750.2 L513.7,752.3 L514.7,750.8 L515.7,748.6 L516.7,749.7 L517.7,746.9 L518.7,747.6 L519.7,746.5 L520.7,747.1 L521.7,744.5 L522.7,743.9 L523.7,743.7 L524.7,742.8 L525.7,745.8 L526.7,745.0 L527.8,746.2 L528.8,744.5 L529.8,748.8 L530.8,748.5 L531.8,745.8 L532.8,746.4 L533.8,741.6 L534.8,743.7 L535.8,741.7 L536.8,742.3 L537.8,740.0 L538.8,738.8 L539.8,737.3 L540.8,734.7 L541.8,736.3 L542.8,732.3 L543.8,733.4 L544.8,728.8 L545.8,730.6 L546.8,727.7 L547.8,726.5 L548.8,727.8 L549.8,724.9 L550.9,723.5 L551.9,722.4 L552.9,722.7 L553.9,724.1 L554.9,720.9 L555.9,722.4 L556.9,720.7 L557.9,721.2 L558.9,727.2 L559.9,728.7 L560.9,727.7 L561.9,731.9 L562.9,730.2 L564.0,732.9 L565.0,731.5 L566.0,734.4 L567.0,734.7 L568.0,731.8 L569.0,734.7 L570.0,730.5 L571.0,731.7 L572.0,733.3 L573.0,734.6 L574.0,736.7 L575.0,733.8 L576.0,733.3 L577.0,732.9 L578.0,730.9 L579.0,730.0 L580.0,726.5 L581.0,725.6 L582.0,723.2 L583.0,722.7 L584.0,724.2 L585.0,721.7 L586.0,722.6 L587.0,722.3 L588.0,722.0 L589.0,721.2 L590.0,722.6 L591.0,720.7 L592.0,722.1 L593.0,723.5 L594.0,725.8 L595.0,727.0 L596.0,727.7 L597.0,723.1 L598.0,725.8 L599.0,721.1 L600.0,722.0 L601.0,720.7 L602.0,716.4 L603.0,717.1 L604.0,711.4 L605.0,710.8 L606.0,706.6 L607.0,707.6 L608.0,709.9 L609.0,711.9 L610.0,714.6 L611.0,715.6 L612.0,712.0 L613.0,712.5 L614.0,709.6 L615.0,708.8 L616.0,702.5 L617.0,702.6 L618.0,702.1 L619.0,699.9 L620.0,699.4 L621.0,697.3 L622.0,698.9 L623.0,696.5 L624.0,696.3 L625.0,697.9 L626.0,698.3 L627.0,699.8 L628.0,700.5 L629.1,693.9 L630.2,692.5 L631.3,685.5 L632.3,684.5 L633.3,684.6 L634.3,680.7 L635.3,683.2 L636.3,680.4 L637.3,676.5 L638.3,677.3 L639.4,669.3 L640.4,668.7 L641.4,664.3 L642.4,664.4 L643.4,666.7 L644.4,662.7 L645.4,667.0 L646.4,666.7 L647.4,668.4 L648.4,669.1 L649.4,666.9 L650.4,667.8 L651.4,665.5 L652.4,664.0 L653.4,661.9 L654.4,662.5 L655.4,661.5 L656.4,661.6 L657.4,660.3 L658.4,655.1 L659.5,653.9 L660.5,649.3 L661.5,651.6 L662.5,657.6 L663.5,660.3 L664.5,655.5 L665.5,651.4 L666.5,646.2 L667.5,644.8 L668.5,647.9 L669.5,645.0 L670.5,647.3 L671.5,646.1 L672.5,648.2 L673.5,646.2 L674.5,648.8 L675.5,656.2 L676.6,659.7 L677.6,667.1 L678.6,670.4 L679.6,666.4 L680.6,665.6 L681.6,658.8 L682.6,658.5 L683.6,653.3 L684.7,649.7 L685.7,650.7 L686.8,646.9 L687.8,646.9 L688.9,642.1 L689.9,643.6 L691.0,639.6 L692.0,640.6 L693.0,644.1 L694.0,642.9 L695.0,646.7 L696.0,646.3 L697.0,640.9 L698.0,638.6 L699.0,643.6 L700.0,641.3 L701.0,645.2 L702.0,645.7 L703.0,649.2 L704.0,657.1 L705.0,658.0 L706.0,663.8 L707.0,661.4 L708.0,655.0 L709.0,650.7 L710.0,644.7 L711.0,640.7 L712.0,639.1 L713.0,636.0 L714.1,637.4 L715.1,631.7 L716.1,630.9 L717.1,627.9 L718.2,626.6 L719.2,624.7 L720.2,622.6 L721.2,626.6 L722.2,627.5 L723.2,632.0 L724.2,632.8 L725.2,636.9 L726.2,639.6 L727.2,637.5 L728.2,638.0 L729.2,634.0 L730.3,634.4 L731.3,631.2 L732.3,630.6 L733.3,636.8 L734.3,632.9 L735.3,638.5 L736.3,636.5 L737.3,642.9 L738.3,643.7 L739.3,639.5 L740.3,639.5 L741.3,635.4 L742.3,634.6 L743.3,633.3 L744.3,632.5 L745.3,632.4 L746.4,630.7 L747.4,631.6 L748.4,629.6 L749.4,627.5 L750.4,629.2 L751.4,627.8 L752.4,627.3 L753.4,623.1 L754.4,626.2 L755.4,623.7 L756.4,624.6 L757.4,626.6 L758.4,623.5 L759.4,629.5 L760.5,627.5 L761.5,629.0 L762.5,630.2 L763.5,631.1 L764.5,631.6 L765.5,627.5 L766.5,629.3 L767.5,626.0 L768.5,624.6 L769.5,629.3 L770.5,628.6 L771.5,633.1 L772.5,631.9 L773.5,634.6 L774.5,635.4 L775.5,631.8 L776.5,631.8 L777.5,629.9 L778.5,631.3 L779.5,628.8 L780.5,627.6 L781.5,626.7 L782.6,621.7 L783.6,619.5 L784.6,618.7 L785.6,615.9 L786.6,617.9 L787.6,615.4 L788.6,617.5 L789.6,616.8 L790.6,615.9 L791.6,615.5 L792.6,613.3 L793.6,611.4 L794.6,608.2 L795.6,607.5 L796.6,604.5 L797.6,607.8 L798.6,611.8 L799.6,613.9 L800.6,616.5 L801.6,617.8 L802.6,610.7 L803.7,609.8 L804.7,606.1 L805.7,605.7 L806.7,602.4 L807.7,602.0 L808.7,602.5 L809.7,603.4 L810.7,605.2 L811.7,603.1 L812.7,605.8 L813.7,602.6 L814.7,604.8 L815.7,602.4 L816.7,604.5 L817.7,604.2 L818.8,599.6 L819.8,600.7 L820.8,596.4 L821.8,593.9 L822.8,594.2 L823.8,591.8 L824.8,591.3 L825.8,589.4 L826.8,587.4 L827.8,588.2 L828.8,588.6 L829.8,588.6 L830.8,586.9 L831.8,587.9 L832.8,586.4 L833.8,584.6 L834.8,588.6 L835.9,587.5 L836.9,591.0 L837.9,590.4 L838.9,586.4 L839.9,583.8 L840.9,576.3 L841.9,575.0 L842.9,576.8 L843.9,577.0 L844.9,578.8 L845.9,576.5 L846.9,578.3 L847.9,576.8 L848.9,572.2 L849.9,572.0 L850.9,568.6 L851.9,566.8 L852.9,564.2 L853.9,564.6 L854.9,567.8 L855.9,568.0 L857.0,571.8 L858.0,570.4 L859.0,574.7 L860.0,573.1 L861.0,575.3 L862.0,574.9 L863.0,573.3 L864.0,573.6 L865.0,568.7 L866.0,570.9 L867.0,571.1 L868.0,570.8 L869.0,569.3 L870.0,565.6 L871.0,567.8 L872.0,563.7 L873.1,565.4 L874.1,562.4 L875.1,563.2 L876.1,560.2 L877.1,560.7 L878.1,564.9 L879.1,565.1 L880.1,570.4 L881.1,570.3 L882.1,570.8 L883.1,572.2 L884.1,571.2 L885.1,572.5 L886.1,572.0 L887.1,572.3 L888.1,572.1 L889.1,567.5 L890.1,566.7 L891.1,564.2 L892.1,562.9 L893.1,563.5 L894.1,562.9 L895.2,565.3 L896.2,561.5 L897.2,562.3 L898.2,561.2 L899.2,563.0 L900.2,566.6 L901.2,570.0 L902.2,574.2 L903.2,576.3 L904.2,575.4 L905.2,579.5 L906.2,578.1 L907.2,579.3 L908.2,578.0 L909.2,574.2 L910.3,572.7 L911.3,570.3 L912.3,571.6 L913.3,573.5 L914.3,573.7 L915.3,575.2 L916.3,576.7 L917.3,578.3 L918.3,576.9 L919.3,572.6 L920.3,571.1 L921.3,568.4 L922.3,566.0 L923.3,561.7 L924.3,562.3 L925.3,558.2 L926.3,558.5 L927.3,561.2 L928.3,562.6 L929.3,564.0 L930.4,564.1 L931.4,566.5 L932.4,566.8 L933.4,570.2 L934.4,570.3 L935.4,569.3 L936.4,569.0 L937.4,566.9 L938.4,568.3 L939.4,566.1 L940.4,566.2 L941.4,564.2 L942.4,564.3 L943.4,565.1 L944.4,565.6 L945.5,567.4 L946.5,565.8 L947.5,568.8 L948.5,566.3 L949.5,568.3 L950.5,567.8 L951.5,564.9 L952.5,565.5 L953.5,564.1 L954.5,563.3 L955.5,558.0 L956.5,561.3 L957.5,556.4 L958.5,558.1 L959.5,556.2 L960.5,555.7 L961.5,558.1 L962.5,555.9 L963.5,557.6 L964.5,557.2 L965.6,558.8 L966.6,557.6 L967.6,559.2 L968.6,558.2 L969.6,559.2 L970.6,558.4 L971.7,554.2 L972.8,554.1 L973.8,548.2 L974.9,549.5 L975.9,544.3 L977.0,545.5 L978.0,540.9 L979.0,541.9 L980.0,542.8 L981.0,541.5 L982.0,546.4 L983.0,545.9 L984.0,540.0 L985.0,538.1 L986.0,532.8 L987.0,530.8 L988.0,530.4 L989.0,528.5 L990.0,527.8 L991.0,525.4 L992.1,526.3 L993.1,522.3 L994.1,521.1 L995.1,519.7 L996.1,518.7 L997.1,522.2 L998.1,526.0 L999.2,528.7 L1000.2,531.6 L1001.2,535.3 L1002.2,538.9 L1003.2,531.1 L1004.2,524.3 L1005.2,514.9 L1006.2,508.7 L1007.2,507.5 L1008.2,504.9 L1009.2,506.9 L1010.2,504.0 L1011.2,503.9 L1012.2,502.7 L1013.2,496.1 L1014.2,496.2 L1015.2,491.2 L1016.2,488.6 L1017.2,486.2 L1018.2,479.1 L1019.3,482.2 L1020.3,477.2 L1021.3,474.5 L1022.3,473.7 L1023.3,469.9 L1024.3,468.7 L1025.3,465.0 L1026.3,465.5 L1027.3,460.8 L1028.3,460.4 L1029.3,461.1 L1030.3,458.3 L1031.3,461.5 L1032.3,459.3 L1033.4,460.3 L1034.4,460.4 L1035.4,461.1 L1036.4,460.4 L1037.4,457.1 L1038.4,455.3 L1039.4,452.4 L1040.4,450.8 L1041.4,451.1 L1042.4,450.2 L1043.4,449.9 L1044.4,447.8 L1045.4,447.8 L1046.4,446.4 L1047.4,449.9 L1048.4,458.7 L1049.4,458.4 L1050.4,452.9 L1051.4,448.1 L1052.4,440.2 L1053.4,435.3 L1054.4,437.1 L1055.4,434.1 L1056.4,437.4 L1057.5,432.1 L1058.5,438.5 L1059.5,435.7 L1060.5,436.3 L1061.5,436.8 L1062.5,435.6 L1063.5,437.5 L1064.5,435.3 L1065.5,435.9 L1066.5,434.6 L1067.5,436.6 L1068.5,434.3 L1069.5,434.7 L1070.5,440.1 L1071.5,437.8 L1072.5,441.3 L1073.5,440.0 L1074.5,436.3 L1075.5,435.7 L1076.6,433.7 L1077.6,432.7 L1078.6,430.3 L1079.6,430.4 L1080.6,432.1 L1081.6,431.7 L1082.6,433.9 L1083.6,432.5 L1084.6,434.3 L1085.6,432.9 L1086.6,428.9 L1087.7,426.2 L1088.7,423.6 L1089.7,422.4 L1090.7,419.2 L1091.7,418.4 L1092.7,419.7 L1093.7,417.1 L1094.7,419.8 L1095.7,417.0 L1096.7,417.8 L1097.7,413.9 L1098.7,415.2 L1099.7,417.0 L1100.7,412.4 L1101.7,410.6 L1102.7,409.6 L1103.7,408.5 L1104.7,406.1 L1105.7,408.4 L1106.7,411.5 L1107.8,412.0 L1108.8,415.7 L1109.8,415.3 L1110.8,420.2 L1111.8,422.0 L1112.8,421.2 L1113.8,426.5 L1114.8,424.4 L1115.8,426.9 L1116.8,427.6 L1117.8,429.3 L1118.8,428.2 L1119.8,424.9 L1120.8,423.8 L1121.8,419.5 L1122.8,419.2 L1123.8,421.5 L1124.8,419.3 L1125.8,424.1 L1126.8,426.2 L1127.9,459.4 L1128.9,455.4 L1129.9,457.6 L1130.9,451.5 L1131.9,451.7 L1132.9,447.1 L1133.9,448.2 L1134.9,444.3 L1135.9,445.2 L1136.9,448.4 L1137.9,448.0 L1138.9,452.6 L1139.9,452.3 L1140.9,455.4 L1141.9,456.9 L1142.9,458.3 L1143.9,460.8 L1144.9,460.4 L1145.9,456.0 L1147.0,454.4 L1148.0,448.0 L1149.0,446.4 L1150.0,447.0 L1151.0,442.9 L1152.0,442.4 L1153.0,440.3 L1154.0,441.5 L1155.0,445.5 L1156.0,446.5 L1157.0,451.4 L1158.0,448.6 L1159.0,453.4 L1160.0,458.9 L1161.0,457.0 L1162.0,459.3 L1163.0,460.2 L1164.1,462.0 L1165.1,463.3 L1166.1,465.5 L1167.1,464.9 L1168.1,468.5 L1169.1,464.3 L1170.1,458.1 L1171.1,454.4 L1172.1,460.5 L1173.1,463.7 L1174.1,471.7 L1175.1,476.5 L1176.1,470.0 L1177.1,466.9 L1178.1,462.7 L1179.1,459.6 L1180.1,453.4 L1181.1,454.2 L1182.2,459.5 L1183.2,460.4 L1184.2,452.0 L1185.2,451.1 L1186.2,444.4 L1187.2,439.9 L1188.2,433.2 L1189.2,427.3 L1190.2,426.5 L1191.2,424.2 L1192.2,424.0 L1193.2,423.4 L1194.2,423.9 L1195.2,419.6 L1196.2,422.3 L1197.2,420.2 L1198.2,416.8 L1199.2,415.5 L1200.2,412.2 L1201.2,412.6 L1202.2,416.1 L1203.2,414.4 L1204.2,418.6 L1205.3,417.6 L1206.3,421.7 L1207.3,421.0 L1208.3,423.2 L1209.3,419.7 L1210.3,412.9 L1211.3,414.1 L1212.3,407.7 L1213.3,405.1 L1214.3,407.5 L1215.3,406.3 L1216.3,412.0 L1217.3,409.1 L1218.3,411.8 L1219.3,410.0 L1220.3,414.2 L1221.5,410.6 L1222.7,403.0 L1223.8,401.2 L1225.0,393.9 L1226.1,392.5 L1227.2,391.9 L1228.3,389.0 L1229.5,389.2 L1230.6,384.2 L1231.7,384.6 L1232.9,387.4 L1234.1,387.1 L1235.2,391.4 L1236.4,391.9 L1237.4,387.8 L1238.4,390.3 L1239.4,385.4 L1240.4,384.6 L1241.6,383.9 L1242.7,379.5 L1243.8,379.5 L1245.0,376.5 L1246.1,377.0 L1247.3,379.2 L1248.4,378.8 L1249.5,380.8 L1250.7,381.8 L1251.8,383.2 L1252.9,381.6 L1254.0,376.9 L1255.2,376.0 L1256.3,372.8 L1257.4,372.3 L1258.5,368.5 L1259.7,366.5 L1260.8,367.6 L1262.0,365.4 L1263.2,364.5 L1264.2,368.5 L1265.2,367.5 L1266.2,371.8 L1267.2,372.5 L1268.3,366.6 L1269.4,364.0 L1270.5,356.4 L1271.6,352.3 L1272.7,353.9 L1273.8,350.1 L1275.0,351.6 L1276.1,346.7 L1277.2,345.0 L1278.3,346.5 L1279.4,345.2 L1280.4,350.4 L1281.5,348.2 L1282.6,349.7 L1283.7,351.0 L1284.8,352.4 L1285.8,355.7 L1286.9,355.1 L1288.0,357.7 L1289.0,358.8 L1290.1,353.9 L1291.1,354.7 L1292.1,352.5 L1293.2,352.1 L1294.2,348.9 L1295.2,347.8 L1296.3,345.8 L1297.3,345.7 L1298.5,348.5 L1299.7,347.8 L1300.8,355.3 L1302.0,356.4 L1303.0,353.1 L1304.0,351.4 L1305.0,347.7 L1306.0,346.7 L1307.0,341.5 L1308.0,339.0 L1309.3,340.8 L1310.7,341.7 L1311.9,338.0 L1313.1,336.4 L1314.2,333.5 L1315.4,330.3 L1316.4,334.3 L1317.4,330.1 L1318.5,333.1 L1319.5,330.5 L1320.5,334.2 L1321.5,332.3 L1322.8,344.3 L1324.0,336.9 L1325.2,334.5 L1326.3,326.0 L1327.5,320.2 L1328.5,318.7 L1329.5,314.1 L1330.5,310.8 L1331.5,308.2 L1332.8,314.1 L1334.2,325.6 L1335.2,321.0 L1336.2,315.0 L1337.2,310.4 L1338.2,304.9 L1339.2,302.1 L1340.2,296.1 L1341.4,299.2 L1342.6,305.1 L1343.7,304.8 L1344.9,309.5 L1346.2,302.4 L1347.6,294.1 L1348.7,295.6 L1349.7,299.1 L1350.8,298.6 L1351.8,301.8 L1352.9,300.2 L1353.9,303.0 L1355.0,304.1 L1356.3,296.5 L1357.7,290.7 L1359.0,291.0 L1360.3,291.4" fill="none" stroke="#5ed916" stroke-width="2.3" stroke-linejoin="round" clip-path="url(#above)"/><path d="M110.8,832.0 L112.0,830.0 L113.3,831.5 L114.5,829.8 L115.8,825.2 L117.0,823.8 L118.0,826.6 L119.0,825.0 L120.0,828.8 L121.7,813.7 L122.8,814.9 L123.8,812.7 L124.9,814.1 L126.0,814.3 L127.0,811.1 L128.0,814.7 L129.0,814.3 L130.0,814.3 L131.0,816.2 L132.0,817.3 L133.0,820.2 L134.0,818.5 L135.0,821.8 L136.0,821.9 L137.0,817.0 L138.0,818.3 L139.0,815.7 L140.0,813.0 L141.0,818.7 L142.0,819.7 L143.0,818.4 L144.0,817.5 L145.0,815.3 L146.0,815.0 L147.0,811.0 L148.0,813.0 L149.0,809.5 L150.0,809.7 L151.0,811.1 L152.0,809.0 L153.0,810.2 L154.0,810.0 L155.0,812.7 L156.0,810.8 L157.0,811.9 L158.0,811.7 L159.0,810.7 L160.0,811.8 L161.0,810.4 L162.0,811.6 L163.0,808.9 L164.0,809.6 L165.0,806.3 L166.0,810.0 L167.0,807.7 L168.0,809.4 L169.0,811.2 L170.0,810.2 L171.0,813.7 L172.0,814.5 L173.0,813.6 L174.0,814.8 L175.0,814.7 L176.2,820.8 L177.4,828.8 L178.4,827.5 L179.4,824.3 L180.4,822.8 L181.4,837.9 L182.4,837.7 L183.5,832.6 L184.5,833.8 L185.5,834.8 L186.5,832.4 L187.5,835.6 L188.5,835.8 L189.5,831.8 L190.5,832.6 L191.5,827.8 L192.5,827.6 L193.5,830.8 L194.5,829.2 L195.5,823.7 L196.5,825.1 L197.5,822.8 L198.5,819.8 L199.5,820.0 L200.5,818.9 L201.6,819.7 L202.6,815.9 L203.6,818.5 L204.6,817.7 L205.6,817.6 L206.6,820.2 L207.6,819.7 L208.6,820.8 L209.6,823.0 L210.6,822.7 L211.6,827.1 L212.6,824.1 L213.6,827.2 L214.6,828.4 L215.6,829.8 L216.6,833.5 L217.6,829.6 L218.6,832.8 L219.6,835.5 L220.6,832.8 L221.6,839.2 L222.6,835.3 L223.7,836.4 L224.7,837.3 L225.7,838.7 L226.7,839.5 L227.7,840.9 L228.7,839.2 L229.7,833.4 L230.7,831.8 L231.7,832.6 L232.7,831.1 L233.7,833.6 L234.7,832.8 L235.7,830.4 L236.7,832.7 L237.7,828.4 L238.7,827.8 L239.7,826.9 L240.7,825.2 L241.7,828.7 L242.7,824.7 L243.8,826.7 L244.8,824.4 L245.8,826.3 L246.8,824.7 L247.8,825.5 L248.8,823.8 L249.8,822.1 L250.8,821.3 L251.8,816.5 L252.8,816.7 L253.8,818.7 L254.8,817.8 L255.8,818.1 L256.9,817.6 L257.9,820.0 L258.9,819.3 L259.9,820.7 L260.9,820.8 L261.9,818.6 L262.9,820.5 L263.9,819.0 L264.9,820.2 L265.9,817.6 L266.9,818.7 L267.9,821.8 L268.9,819.9 L269.9,822.9 L270.9,823.8 L271.9,822.3 L272.9,821.2 L273.9,820.3 L275.0,819.7 L276.0,817.7 L277.0,816.7 L278.0,816.1 L279.0,815.1 L280.0,815.0 L281.0,812.0 L282.0,812.8 L283.0,811.6 L284.0,812.2 L285.0,810.7 L286.0,807.4 L287.0,806.5 L288.0,805.0 L289.0,802.5 L290.0,798.6 L291.0,800.8 L292.0,796.6 L293.0,798.2 L294.0,802.3 L295.0,802.6 L296.0,806.3 L297.0,806.7 L298.0,810.5 L299.0,811.7 L300.0,808.8 L301.0,809.0 L302.0,806.1 L303.0,806.6 L304.0,805.0 L305.0,806.2 L306.0,801.7 L307.0,801.0 L308.0,807.0 L309.0,805.5 L310.0,809.5 L311.0,809.7 L312.0,806.7 L313.0,808.4 L314.0,807.0 L315.0,806.4 L316.0,805.4 L317.0,805.6 L318.0,802.1 L319.0,803.6 L320.0,801.0 L321.0,801.7 L322.0,801.0 L323.0,799.8 L324.0,799.6 L325.0,795.7 L326.0,796.3 L327.0,794.9 L328.0,794.3 L329.0,792.6 L330.0,793.5 L331.0,795.1 L332.0,793.5 L333.0,796.3 L334.0,795.6 L335.0,793.6 L336.0,793.4 L337.0,789.1 L338.0,788.6 L339.0,789.3 L340.0,787.6 L341.0,788.7 L342.0,784.3 L343.0,787.7 L344.0,786.1 L345.0,786.3 L346.0,785.0 L347.0,785.6 L348.0,789.1 L349.0,789.4 L350.0,792.3 L351.0,794.6 L352.0,793.9 L353.0,793.1 L354.0,791.9 L355.0,791.6 L356.0,790.6 L357.0,785.0 L358.0,782.6 L359.1,782.9 L360.1,781.2 L361.2,783.8 L362.2,781.8 L363.3,783.8 L364.3,781.2 L365.4,782.6 L366.4,781.8 L367.4,779.3 L368.4,778.1 L369.4,776.6 L370.5,778.6 L371.5,776.1 L372.5,774.3 L373.5,773.4 L374.5,771.5 L375.5,772.4 L376.5,771.6 L377.5,773.2 L378.5,772.8 L379.5,774.5 L380.5,773.6 L381.5,768.9 L382.5,769.8 L383.5,767.5 L384.5,766.1 L385.5,770.6 L386.6,769.5 L387.6,770.5 L388.6,769.3 L389.6,771.5 L390.6,770.7 L391.6,769.0 L392.6,768.4 L393.6,765.9 L394.6,768.4 L395.6,762.1 L396.6,763.8 L397.6,761.4 L398.7,761.8 L399.7,765.0 L400.8,765.1 L401.9,769.5 L402.9,769.6 L404.0,772.0 L405.0,771.3 L406.0,769.3 L407.0,769.4 L408.0,767.0 L409.0,766.4 L410.0,769.5 L411.0,768.5 L412.0,771.0 L413.0,771.8 L414.0,769.5 L415.0,766.5 L416.0,766.0 L417.0,765.8 L418.0,768.9 L419.0,766.9 L420.0,768.8 L421.0,770.0 L422.0,767.2 L423.0,766.2 L424.0,761.4 L425.0,760.0 L426.0,758.8 L427.0,757.4 L428.0,754.9 L429.0,751.6 L430.0,752.3 L431.0,747.8 L432.0,747.8 L433.0,749.6 L434.0,751.6 L435.0,754.8 L436.0,756.4 L437.0,758.8 L438.0,760.0 L439.0,759.2 L440.0,760.1 L441.0,756.9 L442.0,757.9 L443.0,760.0 L444.0,757.6 L445.0,760.0 L446.0,757.3 L447.0,752.6 L448.0,755.1 L449.0,749.2 L450.0,746.8 L451.1,747.5 L452.1,745.4 L453.2,746.3 L454.3,744.8 L455.3,743.6 L456.3,746.8 L457.4,744.9 L458.4,748.0 L459.4,747.3 L460.4,747.8 L461.4,748.1 L462.4,747.7 L463.4,750.9 L464.4,748.2 L465.4,751.3 L466.4,746.8 L467.4,750.3 L468.5,748.0 L469.5,751.7 L470.5,748.4 L471.5,751.4 L472.5,748.9 L473.5,750.2 L474.5,749.8 L475.5,750.3 L476.5,751.4 L477.5,749.9 L478.5,752.8 L479.5,751.0 L480.5,752.5 L481.5,750.3 L482.5,753.5 L483.5,753.1 L484.5,754.8 L485.5,755.3 L486.5,756.2 L487.5,757.4 L488.5,756.4 L489.5,758.7 L490.5,759.9 L491.5,760.8 L492.6,760.5 L493.6,758.0 L494.6,757.9 L495.6,758.9 L496.6,758.0 L497.6,759.3 L498.6,758.1 L499.6,761.0 L500.6,759.9 L501.6,757.8 L502.6,757.6 L503.6,754.3 L504.6,753.8 L505.6,754.2 L506.6,751.9 L507.6,752.7 L508.6,752.0 L509.7,752.3 L510.7,748.7 L511.7,753.0 L512.7,750.2 L513.7,752.3 L514.7,750.8 L515.7,748.6 L516.7,749.7 L517.7,746.9 L518.7,747.6 L519.7,746.5 L520.7,747.1 L521.7,744.5 L522.7,743.9 L523.7,743.7 L524.7,742.8 L525.7,745.8 L526.7,745.0 L527.8,746.2 L528.8,744.5 L529.8,748.8 L530.8,748.5 L531.8,745.8 L532.8,746.4 L533.8,741.6 L534.8,743.7 L535.8,741.7 L536.8,742.3 L537.8,740.0 L538.8,738.8 L539.8,737.3 L540.8,734.7 L541.8,736.3 L542.8,732.3 L543.8,733.4 L544.8,728.8 L545.8,730.6 L546.8,727.7 L547.8,726.5 L548.8,727.8 L549.8,724.9 L550.9,723.5 L551.9,722.4 L552.9,722.7 L553.9,724.1 L554.9,720.9 L555.9,722.4 L556.9,720.7 L557.9,721.2 L558.9,727.2 L559.9,728.7 L560.9,727.7 L561.9,731.9 L562.9,730.2 L564.0,732.9 L565.0,731.5 L566.0,734.4 L567.0,734.7 L568.0,731.8 L569.0,734.7 L570.0,730.5 L571.0,731.7 L572.0,733.3 L573.0,734.6 L574.0,736.7 L575.0,733.8 L576.0,733.3 L577.0,732.9 L578.0,730.9 L579.0,730.0 L580.0,726.5 L581.0,725.6 L582.0,723.2 L583.0,722.7 L584.0,724.2 L585.0,721.7 L586.0,722.6 L587.0,722.3 L588.0,722.0 L589.0,721.2 L590.0,722.6 L591.0,720.7 L592.0,722.1 L593.0,723.5 L594.0,725.8 L595.0,727.0 L596.0,727.7 L597.0,723.1 L598.0,725.8 L599.0,721.1 L600.0,722.0 L601.0,720.7 L602.0,716.4 L603.0,717.1 L604.0,711.4 L605.0,710.8 L606.0,706.6 L607.0,707.6 L608.0,709.9 L609.0,711.9 L610.0,714.6 L611.0,715.6 L612.0,712.0 L613.0,712.5 L614.0,709.6 L615.0,708.8 L616.0,702.5 L617.0,702.6 L618.0,702.1 L619.0,699.9 L620.0,699.4 L621.0,697.3 L622.0,698.9 L623.0,696.5 L624.0,696.3 L625.0,697.9 L626.0,698.3 L627.0,699.8 L628.0,700.5 L629.1,693.9 L630.2,692.5 L631.3,685.5 L632.3,684.5 L633.3,684.6 L634.3,680.7 L635.3,683.2 L636.3,680.4 L637.3,676.5 L638.3,677.3 L639.4,669.3 L640.4,668.7 L641.4,664.3 L642.4,664.4 L643.4,666.7 L644.4,662.7 L645.4,667.0 L646.4,666.7 L647.4,668.4 L648.4,669.1 L649.4,666.9 L650.4,667.8 L651.4,665.5 L652.4,664.0 L653.4,661.9 L654.4,662.5 L655.4,661.5 L656.4,661.6 L657.4,660.3 L658.4,655.1 L659.5,653.9 L660.5,649.3 L661.5,651.6 L662.5,657.6 L663.5,660.3 L664.5,655.5 L665.5,651.4 L666.5,646.2 L667.5,644.8 L668.5,647.9 L669.5,645.0 L670.5,647.3 L671.5,646.1 L672.5,648.2 L673.5,646.2 L674.5,648.8 L675.5,656.2 L676.6,659.7 L677.6,667.1 L678.6,670.4 L679.6,666.4 L680.6,665.6 L681.6,658.8 L682.6,658.5 L683.6,653.3 L684.7,649.7 L685.7,650.7 L686.8,646.9 L687.8,646.9 L688.9,642.1 L689.9,643.6 L691.0,639.6 L692.0,640.6 L693.0,644.1 L694.0,642.9 L695.0,646.7 L696.0,646.3 L697.0,640.9 L698.0,638.6 L699.0,643.6 L700.0,641.3 L701.0,645.2 L702.0,645.7 L703.0,649.2 L704.0,657.1 L705.0,658.0 L706.0,663.8 L707.0,661.4 L708.0,655.0 L709.0,650.7 L710.0,644.7 L711.0,640.7 L712.0,639.1 L713.0,636.0 L714.1,637.4 L715.1,631.7 L716.1,630.9 L717.1,627.9 L718.2,626.6 L719.2,624.7 L720.2,622.6 L721.2,626.6 L722.2,627.5 L723.2,632.0 L724.2,632.8 L725.2,636.9 L726.2,639.6 L727.2,637.5 L728.2,638.0 L729.2,634.0 L730.3,634.4 L731.3,631.2 L732.3,630.6 L733.3,636.8 L734.3,632.9 L735.3,638.5 L736.3,636.5 L737.3,642.9 L738.3,643.7 L739.3,639.5 L740.3,639.5 L741.3,635.4 L742.3,634.6 L743.3,633.3 L744.3,632.5 L745.3,632.4 L746.4,630.7 L747.4,631.6 L748.4,629.6 L749.4,627.5 L750.4,629.2 L751.4,627.8 L752.4,627.3 L753.4,623.1 L754.4,626.2 L755.4,623.7 L756.4,624.6 L757.4,626.6 L758.4,623.5 L759.4,629.5 L760.5,627.5 L761.5,629.0 L762.5,630.2 L763.5,631.1 L764.5,631.6 L765.5,627.5 L766.5,629.3 L767.5,626.0 L768.5,624.6 L769.5,629.3 L770.5,628.6 L771.5,633.1 L772.5,631.9 L773.5,634.6 L774.5,635.4 L775.5,631.8 L776.5,631.8 L777.5,629.9 L778.5,631.3 L779.5,628.8 L780.5,627.6 L781.5,626.7 L782.6,621.7 L783.6,619.5 L784.6,618.7 L785.6,615.9 L786.6,617.9 L787.6,615.4 L788.6,617.5 L789.6,616.8 L790.6,615.9 L791.6,615.5 L792.6,613.3 L793.6,611.4 L794.6,608.2 L795.6,607.5 L796.6,604.5 L797.6,607.8 L798.6,611.8 L799.6,613.9 L800.6,616.5 L801.6,617.8 L802.6,610.7 L803.7,609.8 L804.7,606.1 L805.7,605.7 L806.7,602.4 L807.7,602.0 L808.7,602.5 L809.7,603.4 L810.7,605.2 L811.7,603.1 L812.7,605.8 L813.7,602.6 L814.7,604.8 L815.7,602.4 L816.7,604.5 L817.7,604.2 L818.8,599.6 L819.8,600.7 L820.8,596.4 L821.8,593.9 L822.8,594.2 L823.8,591.8 L824.8,591.3 L825.8,589.4 L826.8,587.4 L827.8,588.2 L828.8,588.6 L829.8,588.6 L830.8,586.9 L831.8,587.9 L832.8,586.4 L833.8,584.6 L834.8,588.6 L835.9,587.5 L836.9,591.0 L837.9,590.4 L838.9,586.4 L839.9,583.8 L840.9,576.3 L841.9,575.0 L842.9,576.8 L843.9,577.0 L844.9,578.8 L845.9,576.5 L846.9,578.3 L847.9,576.8 L848.9,572.2 L849.9,572.0 L850.9,568.6 L851.9,566.8 L852.9,564.2 L853.9,564.6 L854.9,567.8 L855.9,568.0 L857.0,571.8 L858.0,570.4 L859.0,574.7 L860.0,573.1 L861.0,575.3 L862.0,574.9 L863.0,573.3 L864.0,573.6 L865.0,568.7 L866.0,570.9 L867.0,571.1 L868.0,570.8 L869.0,569.3 L870.0,565.6 L871.0,567.8 L872.0,563.7 L873.1,565.4 L874.1,562.4 L875.1,563.2 L876.1,560.2 L877.1,560.7 L878.1,564.9 L879.1,565.1 L880.1,570.4 L881.1,570.3 L882.1,570.8 L883.1,572.2 L884.1,571.2 L885.1,572.5 L886.1,572.0 L887.1,572.3 L888.1,572.1 L889.1,567.5 L890.1,566.7 L891.1,564.2 L892.1,562.9 L893.1,563.5 L894.1,562.9 L895.2,565.3 L896.2,561.5 L897.2,562.3 L898.2,561.2 L899.2,563.0 L900.2,566.6 L901.2,570.0 L902.2,574.2 L903.2,576.3 L904.2,575.4 L905.2,579.5 L906.2,578.1 L907.2,579.3 L908.2,578.0 L909.2,574.2 L910.3,572.7 L911.3,570.3 L912.3,571.6 L913.3,573.5 L914.3,573.7 L915.3,575.2 L916.3,576.7 L917.3,578.3 L918.3,576.9 L919.3,572.6 L920.3,571.1 L921.3,568.4 L922.3,566.0 L923.3,561.7 L924.3,562.3 L925.3,558.2 L926.3,558.5 L927.3,561.2 L928.3,562.6 L929.3,564.0 L930.4,564.1 L931.4,566.5 L932.4,566.8 L933.4,570.2 L934.4,570.3 L935.4,569.3 L936.4,569.0 L937.4,566.9 L938.4,568.3 L939.4,566.1 L940.4,566.2 L941.4,564.2 L942.4,564.3 L943.4,565.1 L944.4,565.6 L945.5,567.4 L946.5,565.8 L947.5,568.8 L948.5,566.3 L949.5,568.3 L950.5,567.8 L951.5,564.9 L952.5,565.5 L953.5,564.1 L954.5,563.3 L955.5,558.0 L956.5,561.3 L957.5,556.4 L958.5,558.1 L959.5,556.2 L960.5,555.7 L961.5,558.1 L962.5,555.9 L963.5,557.6 L964.5,557.2 L965.6,558.8 L966.6,557.6 L967.6,559.2 L968.6,558.2 L969.6,559.2 L970.6,558.4 L971.7,554.2 L972.8,554.1 L973.8,548.2 L974.9,549.5 L975.9,544.3 L977.0,545.5 L978.0,540.9 L979.0,541.9 L980.0,542.8 L981.0,541.5 L982.0,546.4 L983.0,545.9 L984.0,540.0 L985.0,538.1 L986.0,532.8 L987.0,530.8 L988.0,530.4 L989.0,528.5 L990.0,527.8 L991.0,525.4 L992.1,526.3 L993.1,522.3 L994.1,521.1 L995.1,519.7 L996.1,518.7 L997.1,522.2 L998.1,526.0 L999.2,528.7 L1000.2,531.6 L1001.2,535.3 L1002.2,538.9 L1003.2,531.1 L1004.2,524.3 L1005.2,514.9 L1006.2,508.7 L1007.2,507.5 L1008.2,504.9 L1009.2,506.9 L1010.2,504.0 L1011.2,503.9 L1012.2,502.7 L1013.2,496.1 L1014.2,496.2 L1015.2,491.2 L1016.2,488.6 L1017.2,486.2 L1018.2,479.1 L1019.3,482.2 L1020.3,477.2 L1021.3,474.5 L1022.3,473.7 L1023.3,469.9 L1024.3,468.7 L1025.3,465.0 L1026.3,465.5 L1027.3,460.8 L1028.3,460.4 L1029.3,461.1 L1030.3,458.3 L1031.3,461.5 L1032.3,459.3 L1033.4,460.3 L1034.4,460.4 L1035.4,461.1 L1036.4,460.4 L1037.4,457.1 L1038.4,455.3 L1039.4,452.4 L1040.4,450.8 L1041.4,451.1 L1042.4,450.2 L1043.4,449.9 L1044.4,447.8 L1045.4,447.8 L1046.4,446.4 L1047.4,449.9 L1048.4,458.7 L1049.4,458.4 L1050.4,452.9 L1051.4,448.1 L1052.4,440.2 L1053.4,435.3 L1054.4,437.1 L1055.4,434.1 L1056.4,437.4 L1057.5,432.1 L1058.5,438.5 L1059.5,435.7 L1060.5,436.3 L1061.5,436.8 L1062.5,435.6 L1063.5,437.5 L1064.5,435.3 L1065.5,435.9 L1066.5,434.6 L1067.5,436.6 L1068.5,434.3 L1069.5,434.7 L1070.5,440.1 L1071.5,437.8 L1072.5,441.3 L1073.5,440.0 L1074.5,436.3 L1075.5,435.7 L1076.6,433.7 L1077.6,432.7 L1078.6,430.3 L1079.6,430.4 L1080.6,432.1 L1081.6,431.7 L1082.6,433.9 L1083.6,432.5 L1084.6,434.3 L1085.6,432.9 L1086.6,428.9 L1087.7,426.2 L1088.7,423.6 L1089.7,422.4 L1090.7,419.2 L1091.7,418.4 L1092.7,419.7 L1093.7,417.1 L1094.7,419.8 L1095.7,417.0 L1096.7,417.8 L1097.7,413.9 L1098.7,415.2 L1099.7,417.0 L1100.7,412.4 L1101.7,410.6 L1102.7,409.6 L1103.7,408.5 L1104.7,406.1 L1105.7,408.4 L1106.7,411.5 L1107.8,412.0 L1108.8,415.7 L1109.8,415.3 L1110.8,420.2 L1111.8,422.0 L1112.8,421.2 L1113.8,426.5 L1114.8,424.4 L1115.8,426.9 L1116.8,427.6 L1117.8,429.3 L1118.8,428.2 L1119.8,424.9 L1120.8,423.8 L1121.8,419.5 L1122.8,419.2 L1123.8,421.5 L1124.8,419.3 L1125.8,424.1 L1126.8,426.2 L1127.9,459.4 L1128.9,455.4 L1129.9,457.6 L1130.9,451.5 L1131.9,451.7 L1132.9,447.1 L1133.9,448.2 L1134.9,444.3 L1135.9,445.2 L1136.9,448.4 L1137.9,448.0 L1138.9,452.6 L1139.9,452.3 L1140.9,455.4 L1141.9,456.9 L1142.9,458.3 L1143.9,460.8 L1144.9,460.4 L1145.9,456.0 L1147.0,454.4 L1148.0,448.0 L1149.0,446.4 L1150.0,447.0 L1151.0,442.9 L1152.0,442.4 L1153.0,440.3 L1154.0,441.5 L1155.0,445.5 L1156.0,446.5 L1157.0,451.4 L1158.0,448.6 L1159.0,453.4 L1160.0,458.9 L1161.0,457.0 L1162.0,459.3 L1163.0,460.2 L1164.1,462.0 L1165.1,463.3 L1166.1,465.5 L1167.1,464.9 L1168.1,468.5 L1169.1,464.3 L1170.1,458.1 L1171.1,454.4 L1172.1,460.5 L1173.1,463.7 L1174.1,471.7 L1175.1,476.5 L1176.1,470.0 L1177.1,466.9 L1178.1,462.7 L1179.1,459.6 L1180.1,453.4 L1181.1,454.2 L1182.2,459.5 L1183.2,460.4 L1184.2,452.0 L1185.2,451.1 L1186.2,444.4 L1187.2,439.9 L1188.2,433.2 L1189.2,427.3 L1190.2,426.5 L1191.2,424.2 L1192.2,424.0 L1193.2,423.4 L1194.2,423.9 L1195.2,419.6 L1196.2,422.3 L1197.2,420.2 L1198.2,416.8 L1199.2,415.5 L1200.2,412.2 L1201.2,412.6 L1202.2,416.1 L1203.2,414.4 L1204.2,418.6 L1205.3,417.6 L1206.3,421.7 L1207.3,421.0 L1208.3,423.2 L1209.3,419.7 L1210.3,412.9 L1211.3,414.1 L1212.3,407.7 L1213.3,405.1 L1214.3,407.5 L1215.3,406.3 L1216.3,412.0 L1217.3,409.1 L1218.3,411.8 L1219.3,410.0 L1220.3,414.2 L1221.5,410.6 L1222.7,403.0 L1223.8,401.2 L1225.0,393.9 L1226.1,392.5 L1227.2,391.9 L1228.3,389.0 L1229.5,389.2 L1230.6,384.2 L1231.7,384.6 L1232.9,387.4 L1234.1,387.1 L1235.2,391.4 L1236.4,391.9 L1237.4,387.8 L1238.4,390.3 L1239.4,385.4 L1240.4,384.6 L1241.6,383.9 L1242.7,379.5 L1243.8,379.5 L1245.0,376.5 L1246.1,377.0 L1247.3,379.2 L1248.4,378.8 L1249.5,380.8 L1250.7,381.8 L1251.8,383.2 L1252.9,381.6 L1254.0,376.9 L1255.2,376.0 L1256.3,372.8 L1257.4,372.3 L1258.5,368.5 L1259.7,366.5 L1260.8,367.6 L1262.0,365.4 L1263.2,364.5 L1264.2,368.5 L1265.2,367.5 L1266.2,371.8 L1267.2,372.5 L1268.3,366.6 L1269.4,364.0 L1270.5,356.4 L1271.6,352.3 L1272.7,353.9 L1273.8,350.1 L1275.0,351.6 L1276.1,346.7 L1277.2,345.0 L1278.3,346.5 L1279.4,345.2 L1280.4,350.4 L1281.5,348.2 L1282.6,349.7 L1283.7,351.0 L1284.8,352.4 L1285.8,355.7 L1286.9,355.1 L1288.0,357.7 L1289.0,358.8 L1290.1,353.9 L1291.1,354.7 L1292.1,352.5 L1293.2,352.1 L1294.2,348.9 L1295.2,347.8 L1296.3,345.8 L1297.3,345.7 L1298.5,348.5 L1299.7,347.8 L1300.8,355.3 L1302.0,356.4 L1303.0,353.1 L1304.0,351.4 L1305.0,347.7 L1306.0,346.7 L1307.0,341.5 L1308.0,339.0 L1309.3,340.8 L1310.7,341.7 L1311.9,338.0 L1313.1,336.4 L1314.2,333.5 L1315.4,330.3 L1316.4,334.3 L1317.4,330.1 L1318.5,333.1 L1319.5,330.5 L1320.5,334.2 L1321.5,332.3 L1322.8,344.3 L1324.0,336.9 L1325.2,334.5 L1326.3,326.0 L1327.5,320.2 L1328.5,318.7 L1329.5,314.1 L1330.5,310.8 L1331.5,308.2 L1332.8,314.1 L1334.2,325.6 L1335.2,321.0 L1336.2,315.0 L1337.2,310.4 L1338.2,304.9 L1339.2,302.1 L1340.2,296.1 L1341.4,299.2 L1342.6,305.1 L1343.7,304.8 L1344.9,309.5 L1346.2,302.4 L1347.6,294.1 L1348.7,295.6 L1349.7,299.1 L1350.8,298.6 L1351.8,301.8 L1352.9,300.2 L1353.9,303.0 L1355.0,304.1 L1356.3,296.5 L1357.7,290.7 L1359.0,291.0 L1360.3,291.4" fill="none" stroke="#e8101a" stroke-width="2.3" stroke-linejoin="round" clip-path="url(#below)"/><line x1="1360" y1="832.5" x2="1360" y2="291" stroke="#5ed916" stroke-width="1.5"/><line x1="111" y1="832.5" x2="1361" y2="832.5" stroke="#000" stroke-width="1"/><line x1="110.5" y1="290" x2="110.5" y2="846.5" stroke="#8a8a8a" stroke-width="1"/><line x1="110.5" y1="846.5" x2="1360.5" y2="846.5" stroke="#8a8a8a" stroke-width="1"/></svg>
<div class="t ax" style="right:1606.5px;top:825.34px">$0.00</div>
<div class="t ax" style="right:1606.5px;top:795.34px">$20,000.00</div>
<div class="t ax" style="right:1606.5px;top:765.34px">$40,000.00</div>
<div class="t ax" style="right:1606.5px;top:735.34px">$60,000.00</div>
<div class="t ax" style="right:1606.5px;top:705.34px">$80,000.00</div>
<div class="t ax" style="right:1606.5px;top:675.34px">$100,000.00</div>
<div class="t ax" style="right:1606.5px;top:645.34px">$120,000.00</div>
<div class="t ax" style="right:1606.5px;top:616.34px">$140,000.00</div>
<div class="t ax" style="right:1606.5px;top:586.34px">$160,000.00</div>
<div class="t ax" style="right:1606.5px;top:556.34px">$180,000.00</div>
<div class="t ax" style="right:1606.5px;top:526.34px">$200,000.00</div>
<div class="t ax" style="right:1606.5px;top:496.34px">$220,000.00</div>
<div class="t ax" style="right:1606.5px;top:466.34px">$240,000.00</div>
<div class="t ax" style="right:1606.5px;top:436.34px">$260,000.00</div>
<div class="t ax" style="right:1606.5px;top:406.34px">$280,000.00</div>
<div class="t ax" style="right:1606.5px;top:376.34px">$300,000.00</div>
<div class="t ax" style="right:1606.5px;top:347.34px">$320,000.00</div>
<div class="t ax" style="right:1606.5px;top:317.34px">$340,000.00</div>
<div class="t ax" style="right:1606.5px;top:287.34px">$360,000.00</div>
<div class="t ax" style="left:115.5px;top:852.04px">21/12/2007</div>
<div class="t ax" style="left:185.5px;top:852.04px;width:60px;text-align:center">08/05/2009</div>
<div class="t ax" style="left:255.5px;top:852.04px;width:60px;text-align:center">26/04/2010</div>
<div class="t ax" style="left:325.5px;top:852.04px;width:60px;text-align:center">14/04/2011</div>
<div class="t ax" style="left:395.5px;top:852.04px;width:60px;text-align:center">01/04/2012</div>
<div class="t ax" style="left:465.5px;top:852.04px;width:60px;text-align:center">20/03/2013</div>
<div class="t ax" style="left:536.5px;top:852.04px;width:60px;text-align:center">08/03/2014</div>
<div class="t ax" style="left:606.5px;top:852.04px;width:60px;text-align:center">24/02/2015</div>
<div class="t ax" style="left:676.5px;top:852.04px;width:60px;text-align:center">12/02/2016</div>
<div class="t ax" style="left:746.5px;top:852.04px;width:60px;text-align:center">30/01/2017</div>
<div class="t ax" style="left:816.5px;top:852.04px;width:60px;text-align:center">18/01/2018</div>
<div class="t ax" style="left:887.5px;top:852.04px;width:60px;text-align:center">06/01/2019</div>
<div class="t ax" style="left:957.5px;top:852.04px;width:60px;text-align:center">25/12/2019</div>
<div class="t ax" style="left:1027.5px;top:852.04px;width:60px;text-align:center">12/12/2020</div>
<div class="t ax" style="left:1097.5px;top:852.04px;width:60px;text-align:center">30/11/2021</div>
<div class="t ax" style="left:1167.5px;top:852.04px;width:60px;text-align:center">18/11/2022</div>
<div class="t ax" style="left:1300px;top:852.04px;width:60px;text-align:right">10/02/2025</div>
<div class="t ax" style="left:722px;top:866.34px;">Date</div>
<div class="t ax" style="left:-28.5px;top:560.5px;width:108px;text-align:center;transform:rotate(-90deg)">Cumulative profit ($)</div>
<div class="b" style="left:1373px;top:0px;width:6px;height:895px;background:#fff"></div>
<div class="b" style="left:1374px;top:0px;width:4px;height:895px;background:linear-gradient(90deg,#e2e6e6,#e8e8e8)"></div>
<div class="b" style="left:1379px;top:2px;width:325px;height:887px;border:1px solid #000;background:#fff"></div>
<div class="b hdr" style="left:1380px;top:3px;width:307px;height:28px"></div>
<div class="b" style="left:1380px;top:31px;width:322px;height:1px;background:#000"></div>
<div class="t " style="left:1387px;top:11.34px;">Settings</div>
<svg class="b" style="left:1672px;top:10px" width="8" height="15"><path d="M2 1.5 H5 V7.5 H2 Z M0.3 7.8 H6.7" fill="none" stroke="#000" stroke-width="1.1"/><path d="M3.5 8 V14" stroke="#333" stroke-width="1.5"/></svg>
<div class="b" style="left:1687px;top:3px;width:15px;height:28px;background:#fff;border-left:1px solid #eee"></div>
<svg class="b" style="left:1690px;top:6px" width="10" height="22"><path d="M1 5.8 L9 5.8 L5 1.5 Z M1 15.2 L9 15.2 L5 19.6 Z" fill="#000"/></svg>
<div class="b" style="left:1687px;top:32px;width:15px;height:816px;background:#e8e8e8"></div>
<div class="b" style="left:1687px;top:564px;width:15px;height:283px;background:linear-gradient(90deg,#fff 55%,#ececec);border:1px solid #c4c4c4"></div>
<div class="b" style="left:1704px;top:0px;width:7px;height:895px;background:linear-gradient(90deg,#fff 0,#fff 14%,#e4e4e4 15%,#ececec)"></div>
<div class="b clip" style="left:1380px;top:37.5px;width:307px;height:20px">
<div class="t" style="left:38px;top:-6.16px">Increment</div>
<div class="b tbx" style="left:160px;top:-13px;width:140px;height:23px"><div class="t" style="left:6px;top:5.84px">1</div></div>
</div>
<div class="b" style="left:1533px;top:38px;width:1px;height:13px;background:#000"></div>
<div class="b hdr" style="left:1380px;top:3px;width:307px;height:28px"></div>
<div class="b" style="left:1380px;top:31px;width:322px;height:1px;background:#000"></div>
<div class="t " style="left:1387px;top:11.34px;">Settings</div>
<svg class="b" style="left:1672px;top:10px" width="8" height="15"><path d="M2 1.5 H5 V7.5 H2 Z M0.3 7.8 H6.7" fill="none" stroke="#000" stroke-width="1.1"/><path d="M3.5 8 V14" stroke="#333" stroke-width="1.5"/></svg>
<svg class="b" style="left:1387px;top:58.5px" width="10" height="6"><path d="M0 0 L9.5 0 L4.75 5.5 Z" fill="#000"/></svg>
<div class="t " style="left:1405px;top:55.14px;font-weight:bold">Data Series</div>
<div class="b" style="left:1533px;top:72px;width:1px;height:101px;background:#000"></div>
<div class="t " style="left:1411px;top:79.14px;">Instrument</div>
<div class="b cmb" style="left:1540px;top:76px;width:140px;height:19px;background:linear-gradient(#f0f0f0,#e6e6e6);"><div class="b" style="left:0;top:0;right:0;bottom:0;border:1px solid rgba(255,255,255,0.7);border-bottom-color:rgba(255,255,255,0.35)"></div><div class="t" style="left:6px;top:2.14px">FDAX MAR25</div><svg width="11" height="9" viewBox="0 0 11 9" style="position:absolute;right:3.5px;top:4.0px"><path d="M1.4 1.5 L5.5 6.2 L9.6 1.5" fill="none" stroke="#000" stroke-width="2"/></svg></div>
<div class="t " style="left:1411px;top:103.64px;">Price based on</div>
<div class="b cmb" style="left:1540px;top:99px;width:140px;height:22px;background:linear-gradient(#fbfbfb 0,#efefef 12%,#dadada 45%,#c4c4c4 85%,#d4d4d4 100%);"><div class="b" style="left:0;top:0;right:0;bottom:0;border:1px solid rgba(255,255,255,0.7);border-bottom-color:rgba(255,255,255,0.35)"></div><div class="t" style="left:6px;top:3.64px">Last</div><svg width="11" height="9" viewBox="0 0 11 9" style="position:absolute;right:3.5px;top:5.5px"><path d="M1.4 1.5 L5.5 6.2 L9.6 1.5" fill="none" stroke="#000" stroke-width="2"/></svg></div>
<div class="t " style="left:1411px;top:129.34px;">Type</div>
<div class="b cmb" style="left:1540px;top:125px;width:140px;height:21px;background:linear-gradient(#fbfbfb 0,#efefef 12%,#dadada 45%,#c4c4c4 85%,#d4d4d4 100%);"><div class="b" style="left:0;top:0;right:0;bottom:0;border:1px solid rgba(255,255,255,0.7);border-bottom-color:rgba(255,255,255,0.35)"></div><div class="t" style="left:6px;top:3.14px">Minute</div><svg width="11" height="9" viewBox="0 0 11 9" style="position:absolute;right:3.5px;top:5.0px"><path d="M1.4 1.5 L5.5 6.2 L9.6 1.5" fill="none" stroke="#000" stroke-width="2"/></svg></div>
<div class="t " style="left:1411px;top:152.84px;">Value</div>
<div class="b tbx" style="left:1540px;top:149px;width:140px;height:21px"><div class="t" style="left:6px;top:3.14px">2</div></div>
<svg class="b" style="left:1387px;top:180.3px" width="10" height="6"><path d="M0 0 L9.5 0 L4.75 5.5 Z" fill="#000"/></svg>
<div class="t " style="left:1405px;top:176.94px;font-weight:bold">Time frame</div>
<div class="b" style="left:1533px;top:194px;width:1px;height:102px;background:#000"></div>
<div class="t " style="left:1411px;top:201.44px;">Start date</div>
<div class="b cmb" style="left:1540px;top:197px;width:140px;height:22px;background:linear-gradient(#f0f0f0,#e6e6e6);"><div class="b" style="left:0;top:0;right:0;bottom:0;border:1px solid rgba(255,255,255,0.7);border-bottom-color:rgba(255,255,255,0.35)"></div><svg width="13" height="12" viewBox="0 0 13 12" style="position:absolute;left:6px;top:4.0px"><rect x="0.5" y="0.5" width="12" height="11" fill="#fff" stroke="#222"/><rect x="0.5" y="0.5" width="12" height="2.5" fill="#222"/><path d="M2 4.5h9M2 6.5h9M2 8.5h9M2 10h9" stroke="#333" stroke-width="1" stroke-dasharray="1.5,0.8"/></svg><div class="t" style="left:24px;top:3.64px">02/01/2006</div><svg width="11" height="9" viewBox="0 0 11 9" style="position:absolute;right:3.5px;top:5.5px"><path d="M1.4 1.5 L5.5 6.2 L9.6 1.5" fill="none" stroke="#000" stroke-width="2"/></svg></div>
<div class="t " style="left:1411px;top:225.84px;">End date</div>
<div class="b cmb" style="left:1540px;top:222px;width:140px;height:22px;background:linear-gradient(#f0f0f0,#e6e6e6);"><div class="b" style="left:0;top:0;right:0;bottom:0;border:1px solid rgba(255,255,255,0.7);border-bottom-color:rgba(255,255,255,0.35)"></div><svg width="13" height="12" viewBox="0 0 13 12" style="position:absolute;left:6px;top:4.0px"><rect x="0.5" y="0.5" width="12" height="11" fill="#fff" stroke="#222"/><rect x="0.5" y="0.5" width="12" height="2.5" fill="#222"/><path d="M2 4.5h9M2 6.5h9M2 8.5h9M2 10h9" stroke="#333" stroke-width="1" stroke-dasharray="1.5,0.8"/></svg><div class="t" style="left:24px;top:3.64px">10/02/2025</div><svg width="11" height="9" viewBox="0 0 11 9" style="position:absolute;right:3.5px;top:5.5px"><path d="M1.4 1.5 L5.5 6.2 L9.6 1.5" fill="none" stroke="#000" stroke-width="2"/></svg></div>
<div class="t " style="left:1411px;top:251.64px;">Trading hours</div>
<div class="b cmb" style="left:1540px;top:247px;width:140px;height:22px;background:linear-gradient(#fbfbfb 0,#efefef 12%,#dadada 45%,#c4c4c4 85%,#d4d4d4 100%);"><div class="b" style="left:0;top:0;right:0;bottom:0;border:1px solid rgba(255,255,255,0.7);border-bottom-color:rgba(255,255,255,0.35)"></div><div class="t" style="left:6px;top:3.64px">&lt;Use instrument...</div><svg width="11" height="9" viewBox="0 0 11 9" style="position:absolute;right:3.5px;top:5.5px"><path d="M1.4 1.5 L5.5 6.2 L9.6 1.5" fill="none" stroke="#000" stroke-width="2"/></svg></div>
<div class="t " style="left:1411px;top:276.84px;">Break at EOD</div>
<div class="b" style="left:1541px;top:277.5px;width:11px;height:11px;border:1px solid #222;background:linear-gradient(160deg,#c4c4c4,#eeeeee 70%,#f6f6f6)"></div>
<svg class="b" style="left:1387px;top:304.4px" width="10" height="6"><path d="M0 0 L9.5 0 L4.75 5.5 Z" fill="#000"/></svg>
<div class="t " style="left:1405px;top:301.04px;font-weight:bold">Setup</div>
<div class="b" style="left:1533px;top:318px;width:1px;height:75px;background:#000"></div>
<div class="t " style="left:1411px;top:325.54px;">Include commission</div>
<div class="b" style="left:1541px;top:326.1px;width:11px;height:11px;border:1px solid #222;background:linear-gradient(160deg,#c4c4c4,#eeeeee 70%,#f6f6f6)"></div>
<div class="t " style="left:1411px;top:349.64px;">Maximum bars look...</div>
<div class="b cmb" style="left:1540px;top:345px;width:140px;height:22px;background:linear-gradient(#fbfbfb 0,#efefef 12%,#dadada 45%,#c4c4c4 85%,#d4d4d4 100%);"><div class="b" style="left:0;top:0;right:0;bottom:0;border:1px solid rgba(255,255,255,0.7);border-bottom-color:rgba(255,255,255,0.35)"></div><div class="t" style="left:6px;top:3.64px">256</div><svg width="11" height="9" viewBox="0 0 11 9" style="position:absolute;right:3.5px;top:5.5px"><path d="M1.4 1.5 L5.5 6.2 L9.6 1.5" fill="none" stroke="#000" stroke-width="2"/></svg></div>
<div class="t " style="left:1411px;top:375.14px;">Bars required to trade</div>
<div class="b tbx" style="left:1540px;top:371px;width:140px;height:21px"><div class="t" style="left:6px;top:3.14px">20</div></div>
<svg class="b" style="left:1387px;top:402.6px" width="10" height="6"><path d="M0 0 L9.5 0 L4.75 5.5 Z" fill="#000"/></svg>
<div class="t " style="left:1405px;top:399.24px;font-weight:bold">Historical fill proce...</div>
<div class="b" style="left:1533px;top:416px;width:1px;height:76px;background:#000"></div>
<div class="t " style="left:1411px;top:423.34px;">Order fill resolution</div>
<div class="b cmb" style="left:1540px;top:420px;width:140px;height:22px;background:linear-gradient(#fbfbfb 0,#efefef 12%,#dadada 45%,#c4c4c4 85%,#d4d4d4 100%);"><div class="b" style="left:0;top:0;right:0;bottom:0;border:1px solid rgba(255,255,255,0.7);border-bottom-color:rgba(255,255,255,0.35)"></div><div class="t" style="left:6px;top:3.64px">Standard (Fastest)</div><svg width="11" height="9" viewBox="0 0 11 9" style="position:absolute;right:3.5px;top:5.5px"><path d="M1.4 1.5 L5.5 6.2 L9.6 1.5" fill="none" stroke="#000" stroke-width="2"/></svg></div>
<div class="t " style="left:1411px;top:448.84px;">Fill limit orders on t...</div>
<div class="b" style="left:1541px;top:449.5px;width:11px;height:11px;border:1px solid #222;background:linear-gradient(160deg,#c4c4c4,#eeeeee 70%,#f6f6f6)"></div>
<div class="t " style="left:1411px;top:473.64px;">Slippage</div>
<div class="b tbx" style="left:1540px;top:470px;width:140px;height:20px"><div class="t" style="left:6px;top:2.64px">0</div></div>
<svg class="b" style="left:1387px;top:500.5px" width="10" height="6"><path d="M0 0 L9.5 0 L4.75 5.5 Z" fill="#000"/></svg>
<div class="t " style="left:1405px;top:497.14px;font-weight:bold">Optimize</div>
<div class="b" style="left:1533px;top:514px;width:1px;height:126px;background:#000"></div>
<div class="t " style="left:1411px;top:521.64px;">Keep best # results</div>
<div class="b tbx" style="left:1540px;top:517px;width:140px;height:21px"><div class="t" style="left:6px;top:3.14px">30</div></div>
<div class="t " style="left:1411px;top:545.04px;">Name</div>
<div class="b tbx" style="left:1540px;top:541px;width:140px;height:20px"><div class="t" style="left:6px;top:2.64px">Default</div></div>
<div class="t " style="left:1411px;top:569.14px;">Optimize Data Series</div>
<div class="b" style="left:1541px;top:569.5px;width:11px;height:11px;border:1px solid #222;background:linear-gradient(160deg,#c4c4c4,#eeeeee 70%,#f6f6f6)"></div>
<div class="t " style="left:1411px;top:593.64px;">Optimize on</div>
<div class="b cmb" style="left:1540px;top:590px;width:140px;height:22px;background:linear-gradient(#fbfbfb 0,#efefef 12%,#dadada 45%,#c4c4c4 85%,#d4d4d4 100%);"><div class="b" style="left:0;top:0;right:0;bottom:0;border:1px solid rgba(255,255,255,0.7);border-bottom-color:rgba(255,255,255,0.35)"></div><div class="t" style="left:6px;top:3.64px">Max. Sortino ratio</div><svg width="11" height="9" viewBox="0 0 11 9" style="position:absolute;right:3.5px;top:5.5px"><path d="M1.4 1.5 L5.5 6.2 L9.6 1.5" fill="none" stroke="#000" stroke-width="2"/></svg></div>
<div class="t " style="left:1411px;top:619.44px;">Optimizer</div>
<div class="b cmb" style="left:1540px;top:615px;width:140px;height:22px;background:linear-gradient(#fbfbfb 0,#efefef 12%,#dadada 45%,#c4c4c4 85%,#d4d4d4 100%);"><div class="b" style="left:0;top:0;right:0;bottom:0;border:1px solid rgba(255,255,255,0.7);border-bottom-color:rgba(255,255,255,0.35)"></div><div class="t" style="left:6px;top:3.64px">Default</div><svg width="11" height="9" viewBox="0 0 11 9" style="position:absolute;right:3.5px;top:5.5px"><path d="M1.4 1.5 L5.5 6.2 L9.6 1.5" fill="none" stroke="#000" stroke-width="2"/></svg></div>
<svg class="b" style="left:1387px;top:648.5px" width="10" height="6"><path d="M0 0 L9.5 0 L4.75 5.5 Z" fill="#000"/></svg>
<div class="t " style="left:1405px;top:645.14px;font-weight:bold">Order handling</div>
<div class="b" style="left:1533px;top:662px;width:1px;height:76px;background:#000"></div>
<div class="t " style="left:1411px;top:669.34px;">Entries per direction</div>
<div class="b tbx" style="left:1540px;top:665px;width:140px;height:21px"><div class="t" style="left:6px;top:3.14px">1</div></div>
<div class="t " style="left:1411px;top:693.34px;">Entry handling</div>
<div class="b cmb" style="left:1540px;top:689px;width:140px;height:23px;background:linear-gradient(#fbfbfb 0,#efefef 12%,#dadada 45%,#c4c4c4 85%,#d4d4d4 100%);"><div class="b" style="left:0;top:0;right:0;bottom:0;border:1px solid rgba(255,255,255,0.7);border-bottom-color:rgba(255,255,255,0.35)"></div><div class="t" style="left:6px;top:4.14px">All entries</div><svg width="11" height="9" viewBox="0 0 11 9" style="position:absolute;right:3.5px;top:6.0px"><path d="M1.4 1.5 L5.5 6.2 L9.6 1.5" fill="none" stroke="#000" stroke-width="2"/></svg></div>
<div class="t " style="left:1411px;top:719.04px;">Exit on session close</div>
<div class="b" style="left:1541px;top:719.9px;width:11px;height:11px;border:1px solid #222;background:linear-gradient(160deg,#c4c4c4,#eeeeee 70%,#f6f6f6)"></div>
<svg class="b" style="left:1387px;top:746.7px" width="10" height="6"><path d="M0 0 L9.5 0 L4.75 5.5 Z" fill="#000"/></svg>
<div class="t " style="left:1405px;top:743.34px;font-weight:bold">Order properties</div>
<div class="b" style="left:1533px;top:760px;width:1px;height:54px;background:#000"></div>
<div class="t " style="left:1411px;top:767.24px;">Set order quantity</div>
<div class="b cmb" style="left:1540px;top:763px;width:140px;height:22px;background:linear-gradient(#fbfbfb 0,#efefef 12%,#dadada 45%,#c4c4c4 85%,#d4d4d4 100%);"><div class="b" style="left:0;top:0;right:0;bottom:0;border:1px solid rgba(255,255,255,0.7);border-bottom-color:rgba(255,255,255,0.35)"></div><div class="t" style="left:6px;top:3.64px">Strategy</div><svg width="11" height="9" viewBox="0 0 11 9" style="position:absolute;right:3.5px;top:5.5px"><path d="M1.4 1.5 L5.5 6.2 L9.6 1.5" fill="none" stroke="#000" stroke-width="2"/></svg></div>
<div class="t " style="left:1411px;top:793.64px;">Time in force</div>
<div class="b cmb" style="left:1540px;top:789px;width:140px;height:23px;background:linear-gradient(#fbfbfb 0,#efefef 12%,#dadada 45%,#c4c4c4 85%,#d4d4d4 100%);"><div class="b" style="left:0;top:0;right:0;bottom:0;border:1px solid rgba(255,255,255,0.7);border-bottom-color:rgba(255,255,255,0.35)"></div><div class="t" style="left:6px;top:4.14px">GTC</div><svg width="11" height="9" viewBox="0 0 11 9" style="position:absolute;right:3.5px;top:6.0px"><path d="M1.4 1.5 L5.5 6.2 L9.6 1.5" fill="none" stroke="#000" stroke-width="2"/></svg></div>
<div class="t" style="right:30px;top:827.64px;font-style:italic">template</div>
<div class="b" style="left:1380px;top:848px;width:307px;height:1px;background:#e4e4e4"></div>
<div class="b" style="left:1599px;top:855px;width:98px;height:27px;border:1px solid #444;background:linear-gradient(#f4f4f4 0,#9a9a9a 30%,#6a6a6a 50%,#5a5a5a 100%)"><div class="t" style="left:0;width:96px;text-align:center;top:5.14px;color:#ececec;font-size:15px">Run</div></div>
<div class="b" style="left:363px;top:65px;width:208px;height:282px;background:#333;border:1px solid #222">
<div class="t" style="left:5px;top:6.14px;color:#f2f2f2">2 (LongDepth)</div>
<div class="t" style="left:5px;top:21.14px;color:#f2f2f2">5 (ShortDepth)</div>
<div class="t" style="left:5px;top:36.14px;color:#f2f2f2">17 (Fast)</div>
<div class="t" style="left:5px;top:51.14px;color:#f2f2f2">1 (UseTrendFilter)</div>
<div class="t" style="left:5px;top:66.14px;color:#f2f2f2">0 (AllowShorting)</div>
<div class="t" style="left:5px;top:81.14px;color:#f2f2f2">4.5 (LongStopATR)</div>
<div class="t" style="left:5px;top:96.14px;color:#f2f2f2">4.5 (LongPtATR)</div>
<div class="t" style="left:5px;top:111.14px;color:#f2f2f2">8 (ShortStopATR)</div>
<div class="t" style="left:5px;top:126.14px;color:#f2f2f2">5 (ShortPtATR )</div>
<div class="t" style="left:5px;top:141.14px;color:#f2f2f2">8 (DepthGaugeSmooth)</div>
<div class="t" style="left:5px;top:156.14px;color:#f2f2f2">195 (BarsBack)</div>
<div class="t" style="left:5px;top:171.14px;color:#f2f2f2">1 (LongSize)</div>
<div class="t" style="left:5px;top:186.14px;color:#f2f2f2">0 (ShortSize)</div>
<div class="t" style="left:5px;top:201.14px;color:#f2f2f2">0 (UseTFtoExit)</div>
<div class="t" style="left:5px;top:216.14px;color:#f2f2f2">0 (UseTFasStrategy)</div>
<div class="t" style="left:5px;top:231.14px;color:#f2f2f2">0 (UseFridayTimeCountExit)</div>
<div class="t" style="left:5px;top:246.14px;color:#f2f2f2">400 (ExitOnFridayBarNumber)</div>
<div class="t" style="left:5px;top:261.14px;color:#f2f2f2">400 (LatestFridayEntryBarNumber)</div>
</div>
</body></html>
